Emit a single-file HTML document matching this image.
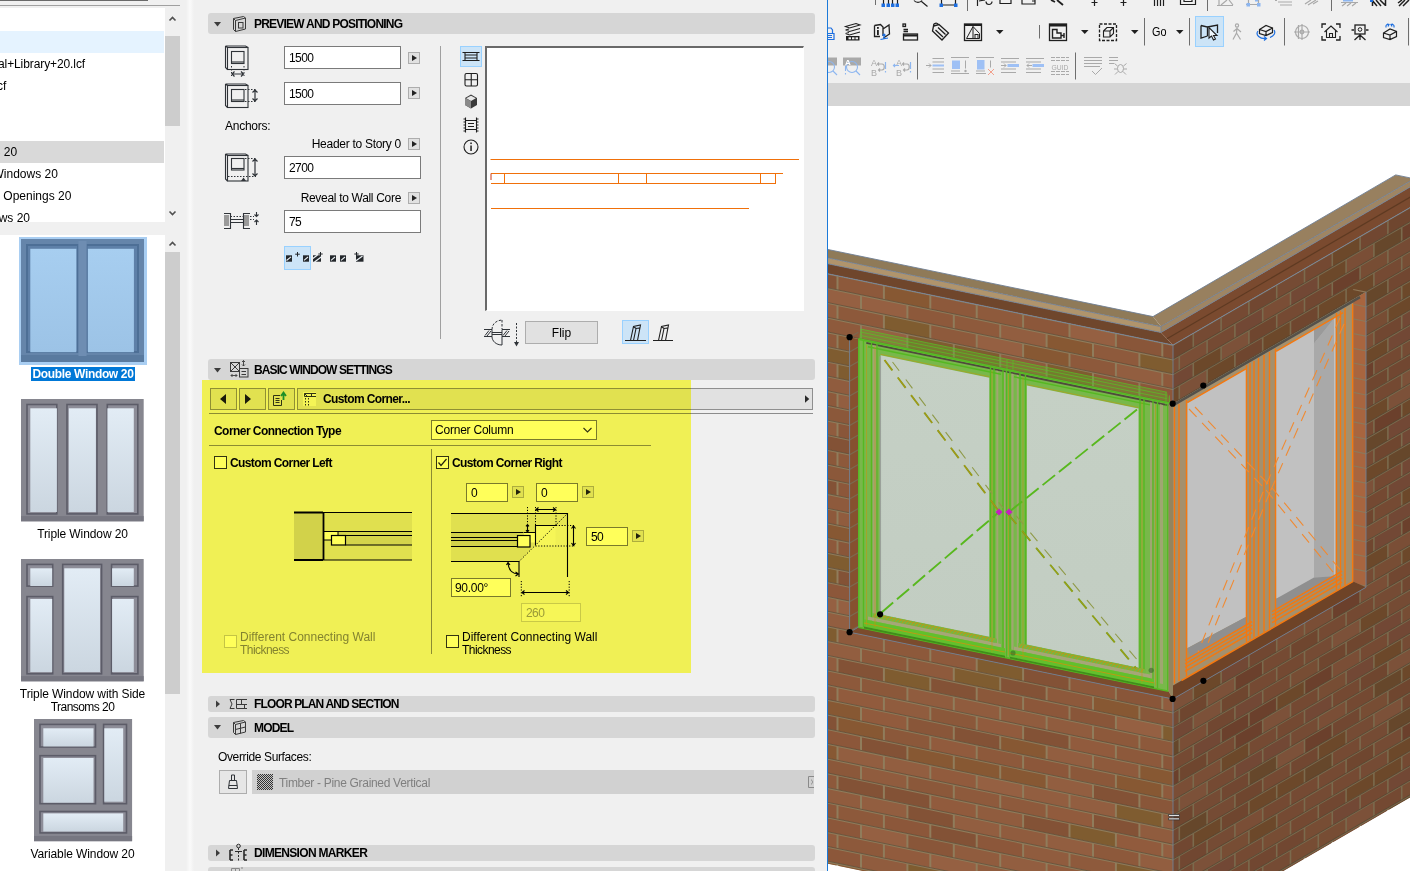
<!DOCTYPE html>
<html lang="en">
<head>
<meta charset="utf-8">
<title>Window Selection Settings</title>
<style>
html,body{margin:0;padding:0;}
body{width:1410px;height:871px;overflow:hidden;background:#f0f0f0;position:relative;
 font-family:"Liberation Sans",sans-serif;font-size:12px;color:#000;}
.a{position:absolute;}
.t{position:absolute;white-space:nowrap;line-height:14px;font-size:12px;}
.b{font-weight:bold;}
.sec{position:absolute;left:208px;width:607px;background:#d6d6d6;border-radius:3px;}
.sec .t{left:46px;font-weight:bold;font-size:12px;}
.inp{position:absolute;background:#fff;border:1px solid #7a7a7a;box-sizing:border-box;}
.inp span{position:absolute;left:4px;top:4px;font-size:12px;line-height:14px;letter-spacing:-0.6px;}
.ab{position:absolute;width:12px;height:12px;box-sizing:border-box;border:1px solid #adadad;background:#e1e1e1;}
.ab:after{content:"";position:absolute;left:3px;top:2px;border-left:5px solid #222;border-top:3.5px solid transparent;border-bottom:3.5px solid transparent;}
svg{position:absolute;overflow:visible;}
</style>
</head>
<body>

<!-- LEFT PANEL -->
<div class="a" style="left:0;top:0;width:148px;height:1.300px;background:#6a6a6a"></div>
<div class="a" style="left:0;top:5px;width:180px;height:1px;background:#a0a0a0"></div>
<div class="a" style="left:186px;top:0;width:8px;height:871px;background:linear-gradient(90deg,#f0f0f0,#fafafa 50%,#f0f0f0)"></div>

<!-- folder list -->
<div class="a" style="left:0;top:8px;width:165px;height:214px;background:#fff"></div>
<div class="a" style="left:0;top:31px;width:164px;height:22px;background:#e5f3ff"></div>
<div class="a" style="left:0;top:141px;width:164px;height:22px;background:#d9d9d9"></div>
<div class="t" style="left:-2px;top:57px;letter-spacing:-0.1px">al+Library+20.lcf</div>
<div class="t" style="left:-3px;top:79px">cf</div>
<div class="t" style="left:-5.500px;top:145px">s 20</div>
<div class="t" style="left:-7.500px;top:167px">Windows 20</div>
<div class="t" style="left:-6px;top:189px">v Openings 20</div>
<div class="t" style="left:-8px;top:211px;height:11px;overflow:hidden">ows 20</div>
<!-- list scrollbar -->
<div class="a" style="left:165px;top:8px;width:15px;height:214px;background:#f0f0f0"></div>
<div class="a" style="left:165px;top:36px;width:15px;height:90px;background:#cdcdcd"></div>
<svg style="left:165px;top:8px" width="15" height="214" viewBox="0 0 15 214"><path d="M4.5 12.5 L7.5 9.5 L10.5 12.5 M4.5 203.5 L7.5 206.5 L10.5 203.5" fill="none" stroke="#505050" stroke-width="1.6"/></svg>

<!-- thumbnails -->
<div class="a" style="left:0;top:235px;width:165px;height:636px;background:#fff"></div>
<div class="a" style="left:165px;top:235px;width:15px;height:636px;background:#f0f0f0"></div>
<div class="a" style="left:165px;top:252px;width:15px;height:441.500px;background:#cdcdcd"></div>
<svg style="left:165px;top:235px" width="15" height="20" viewBox="0 0 15 20"><path d="M4.5 10.5 L7.5 7.5 L10.5 10.5" fill="none" stroke="#505050" stroke-width="1.6"/></svg>

<!-- double window (selected) -->
<div class="a" style="left:19px;top:237px;width:128px;height:128px;background:#a9cef2"></div>
<svg style="left:21px;top:239px" width="123" height="123" viewBox="0 0 123 123">
 <defs><linearGradient id="gb" x1="0" y1="0" x2="0" y2="1"><stop offset="0" stop-color="#a7cef0"/><stop offset="1" stop-color="#9cc3e6"/></linearGradient></defs>
 <rect x="0" y="0" width="123" height="123" fill="#6585aa"/>
 <rect x="0" y="116" width="123" height="7" fill="#597a9f"/>
 <rect x="5" y="5" width="52.500" height="109" fill="#4d6f96"/><rect x="65.500" y="5" width="52.500" height="109" fill="#4d6f96"/>
 <rect x="57.500" y="2" width="8" height="115" fill="#6e8db2"/>
 <rect x="7" y="7" width="49" height="105" fill="#5e80a8"/><rect x="66.500" y="7" width="49.500" height="105" fill="#5e80a8"/>
 <rect x="9.300" y="9.800" width="46" height="103.400" fill="url(#gb)"/><rect x="66.900" y="9.800" width="46" height="103.400" fill="url(#gb)"/>
</svg>
<div class="a" style="left:31px;top:367px;width:104px;height:14px;background:#0078d7"></div>
<div class="t b" style="left:31px;top:367px;width:104px;text-align:center;color:#fff;font-size:12px;letter-spacing:-0.35px">Double Window 20</div>

<!-- triple window -->
<svg style="left:21.4px;top:399.3px" width="122.7" height="122.3" viewBox="0 0 122.7 122.3">
<defs><linearGradient id="g1" x1="0" y1="0" x2="0" y2="1"><stop offset="0" stop-color="#e2ecf5"/><stop offset="1" stop-color="#cbd6e0"/></linearGradient></defs>
<rect width="122.7" height="122.3" fill="#86868f"/><rect y="117.1" width="122.7" height="5.2" fill="#777781"/>
<g fill="#5c5c68"><rect x="5.2" y="4.7" width="31.4" height="111.0"/><rect x="45.2" y="4.7" width="31.6" height="111.0"/><rect x="85.5" y="4.7" width="32.1" height="111.0"/></g>
<g fill="#8d8d98"><rect x="6.800000000000001" y="6.300000000000001" width="28.2" height="107.8"/><rect x="46.800000000000004" y="6.300000000000001" width="28.4" height="107.8"/><rect x="87.1" y="6.300000000000001" width="28.9" height="107.8"/></g>
<g fill="url(#g1)"><rect x="9.3" y="9.3" width="26.6" height="103.7"/><rect x="47.8" y="9.3" width="27.1" height="103.7"/><rect x="86.4" y="9.3" width="26.4" height="103.7"/></g>
</svg>
<div class="t" style="left:0;top:527px;width:165px;text-align:center;letter-spacing:-0.1px">Triple Window 20</div>

<!-- triple window with side transoms -->
<svg style="left:21.4px;top:559.3px" width="122.7" height="122.3" viewBox="0 0 122.7 122.3">
<defs><linearGradient id="g2" x1="0" y1="0" x2="0" y2="1"><stop offset="0" stop-color="#e2ecf5"/><stop offset="1" stop-color="#cbd6e0"/></linearGradient></defs>
<rect width="122.7" height="122.3" fill="#86868f"/><rect y="117.1" width="122.7" height="5.2" fill="#777781"/>
<g fill="#5c5c68"><rect x="5.2" y="4.6" width="27.3" height="23.3"/><rect x="5.2" y="36.8" width="27.3" height="78.8"/><rect x="40.9" y="4.6" width="40.5" height="111.0"/><rect x="89.8" y="4.6" width="27.9" height="23.3"/><rect x="89.8" y="36.8" width="27.9" height="78.8"/></g>
<g fill="#8d8d98"><rect x="6.800000000000001" y="6.199999999999999" width="24.1" height="20.1"/><rect x="6.800000000000001" y="38.4" width="24.1" height="75.6"/><rect x="42.5" y="6.199999999999999" width="37.3" height="107.8"/><rect x="91.39999999999999" y="6.199999999999999" width="24.7" height="20.1"/><rect x="91.39999999999999" y="38.4" width="24.7" height="75.6"/></g>
<g fill="url(#g2)"><rect x="9.3" y="9.3" width="21.9" height="17.7"/><rect x="9.3" y="40" width="21.9" height="73"/><rect x="43.3" y="9.3" width="35.7" height="103.7"/><rect x="91.1" y="9.3" width="21.7" height="17.7"/><rect x="91.1" y="40" width="21.7" height="73"/></g>
</svg>
<div class="t" style="left:0;top:688px;width:165px;text-align:center;line-height:13px;letter-spacing:-0.1px">Triple Window with Side<br><span style="letter-spacing:-0.55px">Transoms 20</span></div>

<!-- variable window -->
<svg style="left:33.5px;top:719.2px" width="98.1" height="122.2" viewBox="0 0 98.1 122.2">
<defs><linearGradient id="g3" x1="0" y1="0" x2="0" y2="1"><stop offset="0" stop-color="#e2ecf5"/><stop offset="1" stop-color="#cbd6e0"/></linearGradient></defs>
<rect width="98.1" height="122.2" fill="#86868f"/><rect y="117.0" width="98.1" height="5.2" fill="#777781"/>
<g fill="#5c5c68"><rect x="5.2" y="4.6" width="57.1" height="24.2"/><rect x="5.2" y="35.9" width="57.1" height="49.6"/><rect x="68.8" y="4.6" width="24.5" height="80.9"/><rect x="5.2" y="91.7" width="88.1" height="23.0"/></g>
<g fill="#8d8d98"><rect x="6.800000000000001" y="6.199999999999999" width="53.9" height="21.0"/><rect x="6.800000000000001" y="37.5" width="53.9" height="46.4"/><rect x="70.39999999999999" y="6.199999999999999" width="21.3" height="77.7"/><rect x="6.800000000000001" y="93.3" width="84.9" height="19.8"/></g>
<g fill="url(#g3)"><rect x="9.3" y="9.3" width="50.2" height="18.2"/><rect x="9.3" y="39" width="50.2" height="44.7"/><rect x="70.3" y="9.3" width="18.9" height="73.4"/><rect x="9.3" y="94.4" width="79.9" height="18.1"/></g>
</svg>
<div class="t" style="left:0;top:847px;width:165px;text-align:center;letter-spacing:-0.1px">Variable Window 20</div>

<!-- MIDDLE PANEL -->

<!-- section: preview and positioning -->
<div class="sec" style="top:13px;height:21px"><div class="t" id="h1" style="top:4px;letter-spacing:-0.78px">PREVIEW AND POSITIONING</div></div>
<svg style="left:208px;top:13px" width="50" height="21" viewBox="0 0 50 21">
 <path d="M6 9 L13 9 L9.500 13.500 Z" fill="#3c3c3c"/>
 <g fill="none" stroke="#3a3a3a" stroke-width="1"><path d="M25.500 5.500 L35.500 3.500 L37.500 5 L37.500 16 L27.500 18.500 L25.500 16.500 Z M27.500 7.500 L37.500 5 M27.500 7.500 L27.500 18.500 M25.500 5.500 L27.500 7.500"/><rect x="30.500" y="9.500" width="4.500" height="5.500"/></g>
</svg>

<!-- width icon -->
<svg style="left:224px;top:45px" width="36" height="34" viewBox="0 0 36 34">
 <g fill="none" stroke="#2f3338" stroke-width="1.1"><rect x="3.500" y="2.500" width="20.500" height="22"/><path d="M1.500 1 L21.500 1 L24 2.500 M1.500 1 L1.500 22.500 L3.500 24.500 M1.500 1 L3.500 2.500"/><rect x="7.500" y="6.500" width="12.500" height="12"/><path d="M7.500 17 L20 17"/></g>
 <g stroke="#2f3338" stroke-width="1" stroke-dasharray="1.500 1.500"><path d="M7.500 21 L7.500 31 M20 21 L20 31"/></g>
 <path d="M8 29 L19.500 29 M10.500 26.500 L8 29 L10.500 31.500 M17 26.500 L19.500 29 L17 31.500" fill="none" stroke="#2f3338" stroke-width="1.200"/>
</svg>
<div class="inp" style="left:284px;top:46px;width:117px;height:23px"><span>1500</span></div>
<div class="ab" style="left:408px;top:52px"></div>

<!-- height icon -->
<svg style="left:224px;top:83px" width="36" height="26" viewBox="0 0 36 26">
 <g fill="none" stroke="#2f3338" stroke-width="1.1"><rect x="3.500" y="2.500" width="20.500" height="22"/><path d="M1.500 1 L21.500 1 L24 2.500 M1.500 1 L1.500 22.500 L3.500 24.500 M1.500 1 L3.500 2.500"/><rect x="7.500" y="6.500" width="12.500" height="12"/><path d="M7.500 17 L20 17"/></g>
 <g stroke="#2f3338" stroke-width="1" stroke-dasharray="1.500 1.500"><path d="M21 6.500 L32 6.500 M21 18.500 L32 18.500"/></g>
 <path d="M31 7 L31 18 M28.500 9.500 L31 7 L33.500 9.500 M28.500 15.500 L31 18 L33.500 15.500" fill="none" stroke="#2f3338" stroke-width="1.200"/>
</svg>
<div class="inp" style="left:284px;top:82px;width:117px;height:23px"><span>1500</span></div>
<div class="ab" style="left:408px;top:87px"></div>

<div class="t" style="left:225px;top:119px;letter-spacing:-0.26px">Anchors:</div>
<div class="t" id="hs" style="left:281px;top:137px;width:120px;text-align:right;letter-spacing:-0.28px">Header to Story 0</div>
<div class="ab" style="left:408px;top:138px"></div>

<!-- header icon -->
<svg style="left:224px;top:153px" width="36" height="30" viewBox="0 0 36 30">
 <g fill="none" stroke="#2f3338" stroke-width="1.1"><rect x="3.500" y="2.500" width="20.500" height="25.500"/><path d="M1.500 1 L21.500 1 L24 2.500 M1.500 1 L1.500 26 L3.500 28 M1.500 1 L3.500 2.500"/><rect x="7.500" y="5.500" width="12.500" height="11.500"/><path d="M7.500 15.500 L20 15.500"/></g>
 <g stroke="#2f3338" stroke-width="1" stroke-dasharray="1.500 1.500"><path d="M21 5.500 L32 5.500 M4 23.500 L32 23.500"/></g>
 <path d="M31 6 L31 23 M28.500 8.500 L31 6 L33.500 8.500 M28.500 20.500 L31 23 L33.500 20.500" fill="none" stroke="#2f3338" stroke-width="1.200"/>
 <path d="M17 28 L19.500 24.500 L22 28 Z" fill="#2f3338"/>
</svg>
<div class="inp" style="left:284px;top:156px;width:137px;height:23px"><span>2700</span></div>

<div class="t" id="rw" style="left:281px;top:191px;width:120px;text-align:right;letter-spacing:-0.31px">Reveal to Wall Core</div>
<div class="ab" style="left:408px;top:192px"></div>

<!-- reveal icon -->
<svg style="left:223px;top:211px" width="38" height="20" viewBox="0 0 38 20">
 <g fill="#9a9a9a" stroke="none"><rect x="1" y="4" width="5" height="11"/><rect x="21" y="4" width="5" height="11"/></g>
 <g fill="none" stroke="#2f3338" stroke-width="1.100"><path d="M1 2.500 L7.500 2.500 L7.500 17.500 L1 17.500 M27 2.500 L20.500 2.500 L20.500 17.500 L27 17.500"/><path d="M7.500 8.500 L20.500 8.500 M7.500 11.500 L20.500 11.500"/></g>
 <g stroke="#2f3338" stroke-width="1" stroke-dasharray="1.500 1.500"><path d="M7.500 5.500 L20.500 5.500 M27 5.500 L31 5.500 M27 8.500 L31 8.500"/></g>
 <path d="M33.500 1 L33.500 5.500 M31.500 3.500 L33.500 5.500 L35.500 3.500 M33.500 14 L33.500 9 M31.500 11 L33.500 9 L35.500 11" fill="none" stroke="#2f3338" stroke-width="1.100"/>
</svg>
<div class="inp" style="left:284px;top:210px;width:137px;height:23px"><span>75</span></div>

<!-- small anchor icons -->
<div class="a" style="left:284px;top:246px;width:27px;height:24px;background:#cce4f7;box-sizing:border-box;border:1px solid #99d1ff"></div>
<svg style="left:284px;top:246px" width="90" height="24" viewBox="0 0 90 24">
 <g fill="#23272b"><rect x="2" y="9.300" width="6" height="6.400"/><rect x="19" y="9.300" width="6" height="6.400"/><rect x="29" y="9.300" width="8" height="6.400"/><rect x="46" y="9.300" width="6" height="6.400"/><rect x="56" y="9.300" width="6" height="6.400"/><rect x="72" y="9.300" width="7.500" height="6.400"/></g>
 <g stroke="#e9eef2" stroke-width="1.100" fill="none"><path d="M2.500 14.500 L7 10.800 M20 14.300 L24 11 M47 14.300 L51 11 M57 14.300 L61 11"/><path d="M28.500 12.800 L33.500 9 M30.500 16 L37.500 10.800 M72 14.800 L78.500 10" stroke-width="1.300"/></g>
 <g stroke="#23272b" stroke-width="1" fill="none"><path d="M13.500 6 L13.500 10.500 M11.200 8.200 L15.800 8.200"/><path d="M36.500 6 L36.500 10 M34.300 8 L38.700 8"/><path d="M72.500 6 L72.500 10 M70.300 8 L74.700 8"/></g>
</svg>

<!-- separator + preview modes -->
<div class="a" style="left:440px;top:46px;width:1px;height:293px;background:#a0a0a0"></div>
<div class="a" style="left:460px;top:46px;width:22px;height:21px;background:#cce4f7;box-sizing:border-box;border:1px solid #99d1ff"></div>
<svg style="left:460px;top:46px" width="22" height="112" viewBox="0 0 22 112">
 <g fill="none" stroke="#1f1f1f" stroke-width="1.100">
  <path d="M2.500 6.500 L19.500 6.500 M2.500 14.500 L19.500 14.500 M5 6.500 L5 14.500 M17 6.500 L17 14.500 M5 9 L17 9 M5 12 L17 12" />
  <rect x="5" y="27.500" width="12.500" height="12.500" rx="1.500"/><path d="M11.250 27.500 L11.250 40 M5 33.750 L17.500 33.750"/>
  <path d="M5.500 71.500 L5.500 86.500 M16.500 71.500 L16.500 86.500 M5.500 74.500 L16.500 74.500 M5.500 83.500 L16.500 83.500 M8 77.500 L14 77.500 M8 80.500 L14 80.500 M3.500 73 L5.500 73 M3.500 76 L5.500 76 M3.500 79 L5.500 79 M3.500 82 L5.500 82 M3.500 85 L5.500 85 M16.500 73 L18.500 73 M16.500 76 L18.500 76 M16.500 79 L18.500 79 M16.500 82 L18.500 82 M16.500 85 L18.500 85"/>
  <circle cx="11" cy="101" r="7"/>
 </g>
 <path d="M11 48.500 L17 52 L17 59 L11 62.500 L5 59 L5 52 Z" fill="#3a3a3a"/><path d="M11 49.800 L15.800 52.300 L11 55 L6.200 52.300 Z" fill="#e8e8e8"/><path d="M11 55 L11 62.500 L5 59 L5 52 Z" fill="#8a8a8a"/>
 <rect x="10.300" y="99.500" width="1.500" height="5.500" fill="#1f1f1f"/><rect x="10.300" y="96.500" width="1.500" height="1.600" fill="#1f1f1f"/>
</svg>

<!-- preview box -->
<div class="a" style="left:485px;top:46px;width:319px;height:265px;background:#fff;box-sizing:border-box;border-left:2px solid #696969;border-top:2px solid #696969;border-right:1px solid #fff;border-bottom:1px solid #fff"></div>
<svg style="left:485px;top:46px" width="319" height="265" viewBox="0 0 319 265">
 <g fill="none" stroke="#f0700a" stroke-width="1">
  <path d="M5.500 113.500 L314 113.500"/>
  <path d="M6 127.500 L298 127.500 M6 137.500 L291 137.500"/>
  <path d="M19.500 127.500 L19.500 137.500 M133.500 127.500 L133.500 137.500 M161.500 127.500 L161.500 137.500 M275.500 127.500 L275.500 137.500 M290.500 127.500 L290.500 137.500"/>
  <path d="M6 162.500 L264 162.500"/>
 </g>
 <path d="M6 127.500 L6 134" stroke="#c83a1a" stroke-width="1"/>
</svg>

<!-- flip row -->
<svg style="left:482px;top:318px" width="40" height="32" viewBox="0 0 40 32">
 <g fill="none" stroke="#2f3338" stroke-width="1"><path d="M2 11.500 L10 11.500 L10 18.500 L2 18.500 M28 11.500 L20 11.500 L20 18.500 L28 18.500"/><path d="M10 14.500 L20 14.500 M10 16.500 L20 16.500"/><path d="M20 18.500 L20 27 C14 27 10 23 10 18.500"/><path d="M10 11.500 C10 6 14 2.500 20 2" stroke-dasharray="2.500 1.500"/><path d="M20 2 L20 11" stroke-dasharray="2.500 1.500"/><path d="M3 17.500 L7 12.500 M5 18 L9 13 M21 17.500 L25 12.500 M23 18 L27 13"/></g>
 <path d="M34.500 5 L34.500 26" stroke="#2f3338" stroke-width="1" stroke-dasharray="2 1.500"/><path d="M32 24 L34.500 28.500 L37 24 Z" fill="#2f3338"/>
</svg>
<div class="a" style="left:525px;top:321px;width:73px;height:23px;background:#e1e1e1;border:1px solid #adadad;box-sizing:border-box"></div>
<div class="t" style="left:525px;top:326px;width:73px;text-align:center">Flip</div>
<div class="a" style="left:622px;top:320px;width:27px;height:24px;background:#cce4f7;box-sizing:border-box;border:1px solid #99d1ff"></div>
<svg style="left:622px;top:320px" width="60" height="24" viewBox="0 0 60 24">
 <g fill="none" stroke="#1f1f1f" stroke-width="1.100"><path d="M3 20.500 L24 20.500 M8.500 20.500 L11.500 6.500 L18.500 5 L15.500 20.500 M11.500 20.500 L14 8.500 M14 8.500 L17.500 8 M11.500 6.500 L14 8.500"/>
 <path d="M31 20.500 L51 20.500 M36.500 20.500 L39.500 6.500 L46.500 5 L43.500 20.500 M39.500 20.500 L42 8.500 M42 8.500 L45.500 8 M39.500 6.500 L42 8.500"/></g>
</svg>

<!-- section: basic window settings -->
<div class="sec" style="top:359px;height:21px"><div class="t" id="h2" style="top:4px;letter-spacing:-0.9px">BASIC WINDOW SETTINGS</div></div>
<svg style="left:208px;top:359px" width="50" height="21" viewBox="0 0 50 21">
 <path d="M6 9 L13 9 L9.500 13.500 Z" fill="#3c3c3c"/>
 <g fill="none" stroke="#3a3a3a" stroke-width="1"><rect x="22.500" y="3.500" width="9" height="9"/><path d="M22.500 3.500 L31.500 12.500 M31.500 3.500 L22.500 12.500"/><rect x="31.500" y="9.500" width="8.500" height="8.500" fill="#d6d6d6"/><path d="M33.500 12.500 L38 12.500 M33.500 15.500 L38 15.500"/></g>
 <path d="M35.500 1.500 L35.500 7 M34 3 L35.500 1.500 L37 3 M34 5.500 L35.500 7 L37 5.500 M23 16.500 L29 16.500 M24.500 15 L23 16.500 L24.500 18 M27.500 15 L29 16.500 L27.500 18" fill="none" stroke="#3a3a3a" stroke-width="0.900"/>
</svg>

<!-- nav row -->
<div class="a" style="left:210px;top:388px;width:27px;height:22px;background:#e1e1e1;border:1px solid #8f8f8f;box-sizing:border-box"></div>
<div class="a" style="left:239px;top:388px;width:27px;height:22px;background:#e1e1e1;border:1px solid #8f8f8f;box-sizing:border-box"></div>
<div class="a" style="left:268px;top:388px;width:27px;height:22px;background:#e1e1e1;border:1px solid #8f8f8f;box-sizing:border-box"></div>
<div class="a" style="left:297px;top:388px;width:516px;height:22px;background:#e1e1e1;border:1px solid #8f8f8f;box-sizing:border-box"></div>
<svg style="left:210px;top:388px" width="605" height="22" viewBox="0 0 605 22">
 <path d="M16 6 L16 16 L10 11 Z M35 6 L35 16 L41 11 Z" fill="#1a1a1a"/>
 <g fill="none" stroke="#2f3338" stroke-width="1"><path d="M63.500 7.500 L70 7.500 M63.500 7.500 L63.500 17.500 L71.500 17.500 L71.500 12 M65.500 10.500 L69.500 10.500 M65.500 12.500 L69.500 12.500 M65.500 14.500 L69.500 14.500"/></g>
 <path d="M73.500 12 L73.500 6 M71 8 L73.500 4.500 L76 8" fill="none" stroke="#1e8f6e" stroke-width="1.800"/>
 <rect x="93" y="4" width="13" height="14" fill="#f4f4f4"/>
 <g fill="none" stroke="#2f3338" stroke-width="1"><path d="M94.500 5.500 L106 5.500 M94.500 8.500 L106 8.500 M101.500 5.500 L101.500 8.500 M94.500 5.500 L94.500 8.500 M97.500 8.500 L94.500 5.500"/><path d="M95.500 10 L95.500 18 M98.500 10 L98.500 18" stroke-dasharray="1.500 1.500"/></g>
 <path d="M595 7.200 L595 14.800 L599.300 11 Z" fill="#2a2a2a"/>
</svg>
<div class="t b" id="cc" style="left:323px;top:392px;letter-spacing:-0.61px">Custom Corner...</div>
<div class="a" style="left:209px;top:413px;width:604px;height:1px;background:#8c8c8c"></div>

<div class="t b" id="cct" style="left:214px;top:424px;letter-spacing:-0.55px">Corner Connection Type</div>
<div class="inp" style="left:431px;top:420px;width:166px;height:20px;border-color:#7a7a7a"><span style="left:3px;top:2px;letter-spacing:-0.22px">Corner Column</span></div>
<svg style="left:580px;top:424px" width="14" height="12" viewBox="0 0 14 12"><path d="M3.500 4 L7.500 8 L11.500 4" fill="none" stroke="#333" stroke-width="1.100"/></svg>
<div class="a" style="left:209px;top:445px;width:442px;height:1px;background:#8c8c8c"></div>
<div class="a" style="left:431px;top:449px;width:1px;height:205px;background:#8c8c8c"></div>

<!-- left column -->
<div class="a" style="left:214px;top:456px;width:13px;height:13px;background:#fff;border:1px solid #333;box-sizing:border-box"></div>
<div class="t b" id="ccl" style="left:230px;top:456px;letter-spacing:-0.6px">Custom Corner Left</div>
<svg style="left:294px;top:511px" width="119" height="51" viewBox="0 0 119 51">
 <rect x="0" y="1" width="29" height="48" fill="#d2d2d2"/>
 <rect x="29" y="1" width="89" height="48" fill="#e0e0e0"/>
 <rect x="44" y="20" width="74" height="14" fill="#d4d4d4"/>
 <rect x="29" y="20" width="15" height="9" fill="#fff"/><rect x="37.500" y="24.500" width="14" height="9.500" fill="#fff"/>
 <g fill="none" stroke="#000"><path d="M0 1.500 L118 1.500 M0 49 L118 49" stroke-width="1.200"/><path d="M29.500 1 L29.500 49" stroke-width="1.800"/><path d="M0 1.500 L29 1.500 M0 49 L29 49" stroke-width="2"/>
 <path d="M44 20.500 L118 20.500 M44 24.500 L118 24.500 M51.500 34 L118 34 M29 20.500 L44 20.500 L44 24.500 M29 29 L37.500 29" stroke-width="1"/><rect x="37.500" y="24.500" width="14" height="9.500" stroke-width="1.200"/></g>
</svg>
<div class="a" style="left:224px;top:635px;width:13px;height:13px;background:#fff;border:1px solid #c4c4c4;box-sizing:border-box"></div>
<div class="t" style="left:240px;top:630.500px;color:#838383;line-height:13px;letter-spacing:0px">Different Connecting Wall<br><span style="letter-spacing:-0.55px">Thickness</span></div>

<!-- right column -->
<div class="a" style="left:436px;top:456px;width:13px;height:13px;background:#fff;border:1px solid #333;box-sizing:border-box"></div>
<svg style="left:436px;top:456px" width="13" height="13" viewBox="0 0 13 13"><path d="M2.500 6.500 L5 9.500 L10.500 3" fill="none" stroke="#222" stroke-width="1.200"/></svg>
<div class="t b" id="ccr" style="left:452px;top:456px;letter-spacing:-0.6px">Custom Corner Right</div>
<div class="inp" style="left:466px;top:483px;width:42px;height:19px"><span style="top:2px">0</span></div>
<div class="ab" style="left:512px;top:486px"></div>
<div class="inp" style="left:536px;top:483px;width:42px;height:19px"><span style="top:2px">0</span></div>
<div class="ab" style="left:582px;top:486px"></div>
<div class="inp" style="left:586px;top:527px;width:42px;height:19px"><span style="top:2px">50</span></div>
<div class="ab" style="left:632px;top:530px"></div>
<div class="inp" style="left:451px;top:578px;width:60px;height:19px"><span style="top:2px;left:3px;letter-spacing:-0.3px">90.00°</span></div>
<div class="inp" style="left:521px;top:603px;width:60px;height:19px;border-color:#c9c9c9;background:#f6f6f6"><span style="top:2px;color:#9a9a9a">260</span></div>
<svg style="left:451px;top:505px" width="126" height="94" viewBox="0 0 126 94">
 <path d="M0 8 L116 8 L68 56 L0 56 Z" fill="#e0e0e0"/><rect x="84.500" y="8.500" width="32" height="12" fill="#e6e6e6"/>
 <path d="M87 8 L116 8 L116 72 L116 8 Z" fill="none"/>
 <rect x="0" y="27" width="66" height="15" fill="#d2d2d2"/><rect x="73" y="27.500" width="11.500" height="10" fill="#fff"/>
 <rect x="84.500" y="20.500" width="20" height="20" fill="#f6f6f6"/>
 <g fill="none" stroke="#000">
  <path d="M0 8.500 L116.500 8.500 L116.500 72" stroke-width="1.100"/>
  <path d="M0 56.500 L68 56.500 L68 72" stroke-width="1.100"/>
  <path d="M0 27.500 L72 27.500 M0 32.500 L66 32.500 M0 35.500 L66 35.500 M0 41.500 L66 41.500" stroke-width="1.100"/>
  <rect x="66.500" y="30.500" width="12.500" height="11.500" fill="#fff" stroke-width="1.200"/>
  <path d="M72.500 27.500 L84.500 27.500 L84.500 20.500 L105 20.500 M84.500 27.500 L84.500 40" stroke-width="1.100"/>
  <g stroke-dasharray="1.200 1.600" stroke-width="1"><path d="M68 56.500 L116.500 8.500 M84.500 41 L124 41 M105 20.500 L124 20.500 M76.500 2 L76.500 19 M84.500 2 L84.500 20 M105 2 L105 20 M70.300 76 L70.300 92.500 M118.200 76 L118.200 92.500"/></g>
  <path d="M85 4.500 L104.500 4.500 M87.500 2.500 L85 4.500 L87.500 6.500 M102 2.500 L104.500 4.500 L102 6.500" stroke-width="1.100"/>
  <path d="M122.500 21 L122.500 40.500 M120.500 23.500 L122.500 21 L124.500 23.500 M120.500 38 L122.500 40.500 L124.500 38" stroke-width="1.100"/>
  <path d="M76.500 19.500 L76.500 27 M75 21.300 L76.500 19.500 L78 21.300 M75 25.200 L76.500 27 L78 25.200" stroke-width="1.100"/>
  <path d="M71 87.500 L117.500 87.500 M73.500 85.500 L71 87.500 L73.500 89.500 M115 85.500 L117.500 87.500 L115 89.500" stroke-width="1.100"/>
  <path d="M57 58 C57.500 65 61 68.500 67 69 M55.500 60 L57 57.500 L59 60 M64.500 67 L67.500 69 L64.500 71" stroke-width="1.100"/>
 </g>
</svg>
<div class="a" style="left:446px;top:635px;width:13px;height:13px;background:#fff;border:1px solid #333;box-sizing:border-box"></div>
<div class="t" style="left:462px;top:630.500px;line-height:13px;letter-spacing:0px">Different Connecting Wall<br><span style="letter-spacing:-0.55px">Thickness</span></div>

<!-- yellow highlight overlay -->
<div class="a" style="left:202px;top:380px;width:489px;height:293px;background:#ffff5a;mix-blend-mode:multiply"></div>

<!-- section: floor plan and section -->
<div class="sec" style="top:696px;height:16px"><div class="t" id="h3" style="top:1px;letter-spacing:-0.86px">FLOOR PLAN AND SECTION</div></div>
<svg style="left:208px;top:696px" width="50" height="16" viewBox="0 0 50 16">
 <path d="M8 4.500 L8 11.500 L12 8 Z" fill="#3c3c3c"/>
 <g fill="none" stroke="#3a3a3a" stroke-width="1"><path d="M22 3.500 L26.500 3.500 M22 12.500 L26.500 12.500 M22 3.500 L24 8 L22 12.500 M28.500 3.500 L39 3.500 M33.500 3.500 L33.500 8.500 M28.500 8.500 L39 8.500 M28.500 3.500 L28.500 12.500 L39 12.500 M36.500 8.500 L36.500 12.500"/></g>
</svg>

<!-- section: model -->
<div class="sec" style="top:717px;height:21px"><div class="t" id="h4" style="top:4px;letter-spacing:-0.8px">MODEL</div></div>
<svg style="left:208px;top:717px" width="50" height="21" viewBox="0 0 50 21">
 <path d="M6 8 L13 8 L9.500 12.500 Z" fill="#3c3c3c"/>
 <g fill="none" stroke="#3a3a3a" stroke-width="1"><path d="M25.500 5.500 L35.500 3.500 L37.500 5 L37.500 15 L27.500 17.500 L25.500 15.500 Z M27.500 7.500 L37.500 5 M27.500 7.500 L27.500 17.500 M25.500 5.500 L27.500 7.500 M32.500 6.500 L32.500 16.500 M27.500 12.500 L37.500 10"/></g>
</svg>
<div class="t" style="left:218px;top:750px;letter-spacing:-0.37px">Override Surfaces:</div>
<div class="a" style="left:219px;top:770px;width:28px;height:24px;background:#e6e6e6;border:1px solid #adadad;box-sizing:border-box"></div>
<svg style="left:219px;top:770px" width="28" height="24" viewBox="0 0 28 24"><g fill="none" stroke="#2f3338" stroke-width="1"><path d="M12.500 5 L15.500 5 L15.500 10.500 L12.500 10.500 Z M10.500 10.500 L17.500 10.500 L18.500 18.500 L9.500 18.500 Z M9.800 15.500 L18.200 15.500"/></g></svg>
<div class="a" style="left:252px;top:770px;width:562px;height:24px;background:#d1d1d1"></div>
<div class="a" style="left:257px;top:774px;width:16px;height:16px;background:#888;background-image:repeating-conic-gradient(#333 0 25%,#c4c4c4 0 50%);background-size:2px 2px"></div>
<div class="t" style="left:279px;top:776px;color:#7f7f7f;letter-spacing:-0.31px">Timber - Pine Grained Vertical</div>
<svg style="left:806px;top:775px" width="8" height="14" viewBox="0 0 8 14"><path d="M8 1.500 L2.500 1.500 L2.500 12.500 L8 12.500 M5 5 C7 5 7 9 5 9" fill="none" stroke="#8a8a8a" stroke-width="1"/></svg>

<!-- section: dimension marker -->
<div class="sec" style="top:845px;height:16px"><div class="t" id="h5" style="top:1px;letter-spacing:-0.68px">DIMENSION MARKER</div></div>
<svg style="left:208px;top:843px" width="50" height="20" viewBox="0 0 50 20">
 <path d="M8 6.500 L8 13.500 L12 10 Z" fill="#3c3c3c"/>
 <g fill="none" stroke="#2a2a2a" stroke-width="1.600"><path d="M22 7 L22 17 M22 7 L25 7 M22 12 L24.500 12 M22 17 L25 17 M36 7 L36 17 M36 7 L39 7 M36 12 L38.500 12 M36 17 L39 17"/></g>
 <g fill="none" stroke="#2a2a2a" stroke-width="1"><path d="M30.500 5 L30.500 18" stroke-dasharray="2 1.500"/><circle cx="30.500" cy="3" r="1.800"/><path d="M27 8.500 L34 8.500"/></g>
</svg>
<div class="sec" style="top:867px;height:10px"></div>
<svg style="left:208px;top:866px" width="50" height="6" viewBox="0 0 50 6"><g fill="none" stroke="#8a8a8a" stroke-width="1"><path d="M23.500 6 L23.500 2.500 L31.500 2.500 L31.500 6 M27.500 2.500 L27.500 6 M34 1 L34 3"/></g></svg>

<!-- RIGHT: TOOLBAR -->
<div class="a" style="left:828px;top:83px;width:582px;height:23px;background:#d5d5d5"></div>
<div class="a" style="left:828px;top:106px;width:582px;height:765px;background:#fff"></div>
<div class="a" style="left:1195px;top:16px;width:29px;height:31px;background:#cce4f7;box-sizing:border-box;border:1px solid #99d1ff"></div>
<svg style="left:828px;top:0;overflow:hidden" width="582" height="83" viewBox="828 0 582 83">
 <!-- separators -->
 <g stroke="#6e6e6e" stroke-width="1"><path d="M875.500 0 L875.500 5 M967.500 0 L967.500 11 M1207.500 0 L1207.500 11 M1331.500 0 L1331.500 11 M1039.500 25 L1039.500 38.500 M1144.500 18 L1144.500 45.500 M1189.500 18 L1189.500 45.500 M1284.500 18 L1284.500 45.500 M1408.500 18 L1408.500 45.500 M917.500 52.500 L917.500 79.500 M1075.500 52.500 L1075.500 79.500"/></g>
 <!-- row 1 (cropped) -->
 <g fill="none" stroke="#1f1f1f" stroke-width="1.200">
  <path d="M883.500 0 L883.500 5 M888.500 0 L888.500 5 M892.500 0 L892.500 5 M897.500 0 L897.500 5"/>
  <path d="M914 0.500 C916 3 920 3 922 0.500 M921.500 1.500 L927.500 6.500"/>
  <path d="M941.500 0 L941.500 5 L955.500 5 L955.500 0"/>
  <path d="M977.500 0 L977.500 6 M979 1 L985 0 M986 1.500 A2.500 2.500 0 0 0 992 1.500"/>
  <path d="M1000 0 L1000 3.500 L1011 3.500 L1011 0 M1022 0 L1022 4 L1035 4 L1035 0 M1032 1 L1035 1"/>
  <path d="M1051 0 L1055 2 M1057 0 L1063 5" stroke-width="1.800"/>
  <path d="M1094.500 0 L1094.500 6 M1091.500 2.500 L1097.500 2.500 M1123.500 0 L1123.500 6 M1120.500 2.500 L1126.500 2.500"/>
  <path d="M1154.500 0 L1154.500 6 M1157.500 0 L1157.500 6 M1160.500 0 L1160.500 6 M1163.500 0 L1163.500 6"/>
  <path d="M1180.500 0 L1180.500 4.500 L1195.500 4.500 L1195.500 0 M1184 0 L1184 1.500 L1192 1.500 L1192 0"/>
  <path d="M1372 0 L1377 6 M1376 0 L1381 6 M1380 0 L1385 5 M1372.500 0 L1372.500 6 M1385.500 0 L1385.500 6 M1398 3 L1402 0 M1399 6 L1405 0 M1403 6 L1409 0" stroke-width="1.500"/>
 </g>
 <g fill="#1e6fe0"><rect x="881.500" y="3.500" width="3.500" height="3.500"/><rect x="886.500" y="3.500" width="3.500" height="3.500"/><rect x="891" y="3.500" width="3.500" height="3.500"/><rect x="895.500" y="3.500" width="3.500" height="3.500"/><rect x="939.500" y="3.500" width="3.500" height="3.500"/><rect x="954" y="3.500" width="3.500" height="3.500"/><rect x="1370" y="0" width="3" height="2"/></g>
 <g fill="none" stroke="#a9a9a9" stroke-width="1.200">
  <path d="M1217 5.500 L1233 5.500 M1219 0 L1219 5.500 M1221 5 L1227 0 M1233 5 L1229 0"/>
  <path d="M1246 4.500 L1260 4.500 M1248.500 0 L1248.500 4.500 M1258.500 0 L1258.500 4.500"/>
  <path d="M1278 2 L1292 2 M1280 5 L1292 5 M1275 0.500 L1277 0.500"/>
  <path d="M1305 4 L1311 0 M1308 5 L1316 0 M1313 4 L1318 1"/>
  <path d="M1341 2.500 L1358 2.500 M1342 6 L1346 3 M1347 6 L1351 3 M1352 6 L1356 3"/>
 </g>
 <g fill="#8db6f0"><rect x="1246.500" y="3" width="3.500" height="3.500"/><rect x="1257" y="3" width="3.500" height="3.500"/><rect x="1255" y="0" width="3" height="1.500"/><rect x="1343" y="0" width="10" height="1.500"/></g>

 <!-- row 2 -->
 <g fill="none" stroke="#1e6fe0" stroke-width="1.200"><path d="M828 28 L831 28 L832.500 30 L832.500 33 M828 33.500 L834 33.500 L834 39.500 L828 39.500 M828 35.500 L832 35.500 M828 37.500 L832 37.500"/></g>
 <g fill="none" stroke="#1f1f1f" stroke-width="1.300">
  <!-- layers -->
  <path d="M845.500 26.500 L856 23.500 L860 25 L849.500 28 Z M845.500 30 L849 29 M860 28.500 L849.500 31.500 L845.500 30 M845.500 33.500 L849 32.500 M860 32 L849.500 35 L845.500 33.500" stroke-width="1.100"/>
  <!-- info/book -->
  <path d="M874.500 25.500 L874.500 36.500 L880 36.500 M874.500 25.500 L880.500 24.500 L883 27 L883 36 M883 29 L889 25 L889.500 34 L883.500 38"/>
  <!-- stair/list -->
  <rect x="903" y="24" width="2.500" height="2.500"/><path d="M903.500 29.500 L908 29.500 M903.500 31.500 L908 31.500"/>
  <rect x="903.500" y="34" width="14" height="6"/>
  <!-- tag -->
  <path d="M933.500 26 L939 24.500 L948.500 33 L942 40 L932.500 31 Z M935.500 30 L943 37 M938 27.500 L945.500 34.500"/><path d="M934 26.500 C932 23 938 22 938.500 25"/>
  <!-- house frame -->
  <rect x="964.500" y="24" width="17" height="16.500"/><path d="M966.500 38.500 L973 26.500 L979.500 33.500 L979.500 38.500 Z M973 26.500 L973 38.500" stroke-width="1"/><rect x="975" y="34.500" width="3" height="4" stroke-width="1"/>
  <!-- floor plan -->
  <rect x="1049.500" y="24" width="17" height="16.500"/><path d="M1052.500 38 L1052.500 29.500 L1057 29.500 L1057 33 L1061 33 L1061 38 Z M1061 35.500 L1064 35.500 M1064 33 L1064 38" stroke-width="1.400"/>
  <!-- dashed cube -->
  <rect x="1099.500" y="24" width="17" height="16.500" stroke-dasharray="3 1.500"/><path d="M1103.500 31 L1107 27.500 L1113.500 27.500 L1113.500 33.500 L1110 37 L1103.500 37 Z M1103.500 31 L1110 31 L1110 37 M1110 31 L1113.500 27.500" stroke-width="1.100"/>
  <!-- 3d window select -->
  <path d="M1201 25.500 L1201 38 L1207.500 36 M1201 25.500 L1207.500 27 L1207.500 36 M1207.500 27 L1217.500 25 L1217.500 33" />
  <path d="M1209 27.500 L1209 38 L1211.500 36 L1213.500 40 L1215.500 39 L1213.500 35.500 L1217 35.500 Z" fill="#f0f7fd" stroke-width="1.100"/>
  <!-- orbit box -->
  <path d="M1259.500 29.500 L1266 25.500 L1272.500 28 L1272.500 32.500 L1266 35.500 L1259.500 33.500 Z M1259.500 29.500 L1266 31.500 L1272.500 28 M1266 31.500 L1266 35.500" stroke-width="1.200"/>
  <!-- house brackets -->
  <path d="M1322 28 L1322 24 L1326 24 M1336 24 L1340 24 L1340 28 M1340 36 L1340 40 L1336 40 M1326 40 L1322 40 L1322 36"/><path d="M1324.500 32 L1331 26 L1337.500 32 M1326.500 30.500 L1326.500 37.500 L1335.500 37.500 L1335.500 30.500 M1329.500 37.500 L1329.500 33.500 L1332.500 33.500 L1332.500 37.500" stroke-width="1.100"/>
  <!-- tripod cam -->
  <rect x="1355" y="25" width="10" height="9"/><circle cx="1360" cy="29.500" r="1.800" stroke-width="1"/><path d="M1351.500 30 L1354 30 M1366 30 L1368.500 30 M1360 34 L1360 40 M1360 35 L1354.500 40 M1360 35 L1365.500 40"/>
  <!-- box arrows -->
  <path d="M1383.500 33 L1390 29 L1396.500 31.500 L1396.500 36.500 L1390 39.500 L1383.500 37.500 Z M1383.500 33 L1390 35 L1396.500 31.500 M1390 35 L1390 39.500" stroke-width="1.200"/>
 </g>
 <g fill="#1f1f1f"><rect x="846" y="36" width="13.500" height="4.500"/><rect x="904" y="34.500" width="13" height="2"/><rect x="965" y="24" width="16" height="2"/><rect x="1050" y="24" width="16" height="2.500"/>
  <path d="M996 30 L1003.500 30 L999.750 34 Z M1081 30 L1088.500 30 L1084.750 34 Z M1131 30 L1138.500 30 L1134.750 34 Z M1176 30 L1183.500 30 L1179.750 34 Z"/>
  <rect x="877" y="27" width="1.800" height="1.800"/><rect x="877" y="30" width="1.800" height="5"/></g>
 <g fill="#f0f0f0"><rect x="848.500" y="37.300" width="2.500" height="2"/><rect x="852" y="37.300" width="2.500" height="2"/><rect x="855.500" y="37.300" width="2.500" height="2"/></g>
 <g fill="none" stroke="#1e6fe0" stroke-width="1.200"><path d="M884 34 L884 40 M880.500 39.500 L888 38 M882.500 35.500 L884 34 L885.500 35.500"/>
  <path d="M1258 31 C1255 35 1260 39 1266 38.500 M1264 36.500 L1266.500 38.500 L1264 40.500 M1274 30 C1276 33 1274 36 1270 37.500"/>
  <path d="M1386 27.500 C1385.500 25 1387 24 1389 24.500 M1387 24 L1389 24.500 L1388 26.500 M1394 27.500 C1394.500 25 1393 24 1391 24.500 M1393 24 L1391 24.500 L1392 26.500"/></g>
 <!-- grey icons row2 -->
 <g fill="none" stroke="#a9a9a9" stroke-width="1.200"><circle cx="1237" cy="25.500" r="1.600"/><path d="M1237 27.500 L1236.500 33 L1233 39.500 M1236.500 33 L1240.500 39.500 M1233.500 31.500 L1237 28.500 L1241 32"/>
  <circle cx="1302" cy="32" r="6.500"/><circle cx="1302" cy="32" r="1.800"/><path d="M1294 32 L1310 32 M1302 24 L1302 40 M1298.500 25 L1298.500 39"/></g>
 <text x="1152" y="35.800" font-family="Liberation Sans, sans-serif" font-size="12" fill="#000" textLength="14.500" lengthAdjust="spacingAndGlyphs">Go</text>

 <!-- row 3 (disabled) -->
 <g fill="#a9a9a9"><rect x="828" y="57.500" width="9" height="8"/><rect x="843" y="57.500" width="18" height="8"/></g>
 <g fill="none" stroke="#8db6f0" stroke-width="1.100"><circle cx="829" cy="67" r="5.500"/><path d="M833 71 L837 75"/><circle cx="852" cy="67" r="5.500"/><path d="M856 71 L860 75 M845.500 66 L845.500 71 M845.500 73 L845.500 74.500"/></g>
 <text x="845" y="64.500" font-family="Liberation Sans, sans-serif" font-size="8" font-weight="bold" fill="#fff">A</text>
 <g font-family="Liberation Sans, sans-serif" font-size="9" fill="#a9a9a9"><text x="871" y="66">A</text><text x="871" y="76">B</text><text x="896" y="66">A</text><text x="896" y="76">B</text></g>
 <g fill="none" stroke="#a9a9a9" stroke-width="1.100"><path d="M877.500 64 L882 64 C885 64 885 70 882 70 L878.500 70 M880 68.500 L878.500 70 L880 71.500 M879 62.500 L877.500 64 L879 65.500"/><path d="M902.500 64 L907 64 C910 64 910 70 907 70 L903.500 70 M905 68.500 L903.500 70 L905 71.500 M904 62.500 L902.500 64 L904 65.500"/></g>
 <g fill="none" stroke="#8db6f0" stroke-width="1.200"><path d="M885.500 62 L885.500 69 M885.500 71 L885.500 72.500 M910.500 62 L910.500 69 M910.500 71 L910.500 72.500 M893.500 65.500 L899 65.500 M895 64 L893.500 65.500 L895 67"/></g>
 <g fill="none" stroke="#a9a9a9" stroke-width="1"><path d="M932.500 58.500 L944 58.500 M932.500 62 L944 62 M932.500 69 L944 69 M932.500 72.500 L944 72.500 M926 65.500 L931 65.500 M929 63.500 L931 65.500 L929 67.500"/>
  <path d="M951 57.500 L969 57.500 M951 73.500 L969 73.500 M951 71 L960 71 M965.500 60.500 L965.500 68.500"/>
  <path d="M976 57.500 L994 57.500 M976 73.500 L986 73.500 M976 71 L985 71 M990.500 60.500 L990.500 67.500"/>
  <path d="M1001 58.500 L1019 58.500 M1001 62 L1016 62 M1001 69 L1016 69 M1001 72.500 L1016 72.500 M1001 65.500 L1006 65.500 M1004 63.500 L1006 65.500 L1004 67.500"/>
  <path d="M1026 58.500 L1044 58.500 M1026 62 L1041 62 M1026 69 L1041 69 M1026 72.500 L1041 72.500 M1027 65.500 L1032 65.500 M1029 63.500 L1027 65.500 L1029 67.500"/>
  <path d="M1051 57.500 L1069 57.500 M1051 60.500 L1069 60.500 M1051 71.500 L1069 71.500 M1051 74.500 L1069 74.500" stroke-dasharray="4 1"/>
  <path d="M1084 57.500 L1102 57.500 M1084 60.500 L1102 60.500 M1084 63.500 L1102 63.500 M1084 66.500 L1100 66.500 M1092 71 L1095.500 74.500 L1102 68"/>
  <path d="M1109 57.500 L1118 57.500 M1109 60.500 L1118 60.500 M1109 63.500 L1114 63.500"/><ellipse cx="1120.500" cy="68.500" rx="3" ry="4"/><path d="M1117.500 66 L1114.500 63.500 M1123.500 66 L1126.500 63.500 M1117.500 69 L1114 69 M1123.500 69 L1127 69 M1118 71.500 L1115 74.500 M1123 71.500 L1126 74.500"/>
 </g>
 <g fill="#9ec0f5"><rect x="932.500" y="64.500" width="11.500" height="2"/><rect x="952" y="60.500" width="8" height="8.500"/><rect x="977" y="60" width="7.500" height="9.500"/><rect x="1007.500" y="64" width="11.500" height="3"/><rect x="1032.500" y="64" width="11.500" height="3"/></g>
 <circle cx="965.500" cy="71" r="1.200" fill="#a9a9a9"/>
 <path d="M988 69 L994 75 M994 69 L988 75" stroke="#f2a08c" stroke-width="1" fill="none"/>
 <text x="1051.500" y="70" font-family="Liberation Sans, sans-serif" font-size="8" fill="#a9a9a9" textLength="17" lengthAdjust="spacingAndGlyphs">GUID</text>
</svg>
<!-- blue window edge -->
<div class="a" style="left:826.500px;top:0;width:1.500px;height:871px;background:#1c7ad9"></div>

<!-- 3D VIEW -->
<svg style="left:828px;top:106px" width="582" height="765" viewBox="828 106 582 765">
<defs>
<clipPath id="cv"><rect x="828" y="106" width="582" height="765"/></clipPath>
<clipPath id="cl"><path d="M828 273.8 L1173 345 L1173 935 L828 863.8 Z"/></clipPath>
<clipPath id="cr"><path d="M1173 345 L1412 206.4 L1412 796.4 L1173 935 Z"/></clipPath>
<linearGradient id="gl" x1="0" y1="0" x2="0" y2="1"><stop offset="0" stop-color="#c5d0c5"/><stop offset="1" stop-color="#c2cdc2"/></linearGradient>
</defs>
<g clip-path="url(#cv)">
<g clip-path="url(#cl)"><path d="M828 273.8 L1173 345 L1173 935 L828 863.8 Z" fill="#907c5b"/>
<path fill="#8e5a3c" d="M977.7 305.6L1022.1 314.7v12.9L977.7 318.5ZM1094 344.3L1138.4 353.5v12.9L1094 357.2ZM954.8 315.5L999.2 324.7v12.9L954.8 328.4ZM931.3 325.4L975.7 334.6v12.9L931.3 338.3ZM1001.2 354.5L1045.6 363.7v12.9L1001.2 367.4ZM815.6 316.2L860 325.4v12.9L815.6 329.1ZM1116.9 393.1L1161.3 402.3v12.9L1116.9 406ZM792.1 355.4L836.5 364.6v12.9L792.1 368.3ZM1094 491.3L1138.4 500.5v12.9L1094 504.2ZM954.8 491.9L999.2 501.1v12.9L954.8 504.8ZM1140.4 559.7L1173 566.4v12.9L1140.4 572.6ZM815.6 492.6L860 501.8v12.9L815.6 505.5ZM908.4 570.6L952.8 579.7v12.9L908.4 583.5ZM1024.1 609.2L1068.5 618.3v12.9L1024.1 622.1ZM1116.9 657.7L1161.3 666.9v12.9L1116.9 670.6ZM954.8 638.9L999.2 648.1v12.9L954.8 651.8ZM931.3 648.8L975.7 658v12.9L931.3 661.7ZM838.5 629.6L882.9 638.8v12.9L838.5 642.5ZM908.4 658.8L952.8 667.9v12.9L908.4 671.7ZM1094 755.9L1138.4 765.1v12.9L1094 768.8ZM1163.3 784.9L1173 786.9v12.9L1163.3 797.8ZM1001.2 795.5L1045.6 804.7v12.9L1001.2 808.4ZM954.8 785.9L999.2 795.1v12.9L954.8 798.8ZM1070.5 853.9L1114.9 863.1v12.9L1070.5 866.8ZM1001.2 883.7L1045.6 892.9v12.9L1001.2 896.6Z"/>
<path fill="#8d593b" d="M931.3 296L975.7 305.2v12.9L931.3 308.9ZM838.5 276.8L882.9 286v12.9L838.5 289.7ZM908.4 306L952.8 315.1v12.9L908.4 318.9ZM1163.3 373.3L1173 375.3v12.9L1163.3 386.2ZM1070.5 354.1L1114.9 363.3v12.9L1070.5 367ZM838.5 306.2L882.9 315.4v12.9L838.5 319.1ZM792.1 326L836.5 335.2v12.9L792.1 338.9ZM908.4 364.8L952.8 373.9v12.9L908.4 377.7ZM1024.1 403.4L1068.5 412.5v12.9L1024.1 416.3ZM884.9 374.6L929.3 383.8v12.9L884.9 387.5ZM792.1 384.8L836.5 394v12.9L792.1 397.7ZM1116.9 481.3L1161.3 490.5v12.9L1116.9 494.2ZM1070.5 471.7L1114.9 480.9v12.9L1070.5 484.6ZM1001.2 472.1L1045.6 481.3v12.9L1001.2 485ZM884.9 462.8L929.3 472v12.9L884.9 475.7ZM838.5 453.2L882.9 462.4v12.9L838.5 466.1ZM1001.2 501.5L1045.6 510.7v12.9L1001.2 514.4ZM908.4 511.8L952.8 520.9v12.9L908.4 524.7ZM792.1 502.4L836.5 511.6v12.9L792.1 515.3ZM792.1 531.8L836.5 541v12.9L792.1 544.7ZM1140.4 677.3L1173 684v12.9L1140.4 690.2ZM862 619.8L906.4 628.9v12.9L862 632.7ZM1070.5 677.5L1114.9 686.7v12.9L1070.5 690.4ZM884.9 639.2L929.3 648.4v12.9L884.9 652.1ZM1047.6 687.5L1092 696.7v12.9L1047.6 700.4ZM862 649.2L906.4 658.3v12.9L862 662.1ZM1140.4 736.1L1173 742.8v12.9L1140.4 749ZM1094 726.5L1138.4 735.7v12.9L1094 739.4ZM815.6 669L860 678.2v12.9L815.6 681.9ZM1116.9 745.9L1161.3 755.1v12.9L1116.9 758.8ZM977.7 746.6L1022.1 755.7v12.9L977.7 759.5ZM792.1 767L836.5 776.2v12.9L792.1 779.9ZM1094 844.1L1138.4 853.3v12.9L1094 857ZM838.5 806L882.9 815.2v12.9L838.5 818.9ZM1140.4 883.1L1173 889.8v12.9L1140.4 896ZM1116.9 892.9L1161.3 902.1v12.9L1116.9 905.8ZM838.5 835.4L882.9 844.6v12.9L838.5 848.3Z"/>
<path fill="#895639" d="M1116.9 334.3L1161.3 343.5v12.9L1116.9 347.2ZM1024.1 374L1068.5 383.1v12.9L1024.1 386.9ZM884.9 345.2L929.3 354.4v12.9L884.9 358.1ZM954.8 374.3L999.2 383.5v12.9L954.8 387.2ZM931.3 413.6L975.7 422.8v12.9L931.3 426.5ZM931.3 443L975.7 452.2v12.9L931.3 455.9ZM838.5 423.8L882.9 433v12.9L838.5 436.7ZM1001.2 530.9L1045.6 540.1v12.9L1001.2 543.8ZM1070.5 559.9L1114.9 569.1v12.9L1070.5 572.8ZM1140.4 589.1L1173 595.8v12.9L1140.4 602ZM908.4 541.2L952.8 550.3v12.9L908.4 554.1ZM838.5 541.4L882.9 550.6v12.9L838.5 554.3ZM1140.4 618.5L1173 625.2v12.9L1140.4 631.4ZM1094 608.9L1138.4 618.1v12.9L1094 621.8ZM1163.3 637.9L1173 639.9v12.9L1163.3 650.8ZM977.7 599.6L1022.1 608.7v12.9L977.7 612.5ZM1047.6 628.7L1092 637.9v12.9L1047.6 641.6ZM1116.9 687.1L1161.3 696.3v12.9L1116.9 700ZM1140.4 706.7L1173 713.4v12.9L1140.4 719.6ZM1070.5 706.9L1114.9 716.1v12.9L1070.5 719.8ZM1163.3 755.5L1173 757.5v12.9L1163.3 768.4ZM792.1 678.8L836.5 688v12.9L792.1 691.7ZM908.4 717.6L952.8 726.7v12.9L908.4 730.5ZM1140.4 794.9L1173 801.6v12.9L1140.4 807.8ZM908.4 835.2L952.8 844.3v12.9L908.4 848.1ZM1140.4 912.5L1173 919.2v12.9L1140.4 925.4ZM1094 902.9L1138.4 912.1v12.9L1094 915.8ZM1047.6 893.3L1092 902.5v12.9L1047.6 906.2ZM954.8 874.1L999.2 883.3v12.9L954.8 887ZM1163.3 931.9L1173 933.9v12.9L1163.3 944.8ZM884.9 874.4L929.3 883.6v12.9L884.9 887.3Z"/>
<path fill="#925e40" d="M1001.2 325.1L1045.6 334.3v12.9L1001.2 338ZM1116.9 363.7L1161.3 372.9v12.9L1116.9 376.6ZM792.1 296.6L836.5 305.8v12.9L792.1 309.5ZM1163.3 402.7L1173 404.7v12.9L1163.3 415.6ZM1116.9 422.5L1161.3 431.7v12.9L1116.9 435.4ZM1094 432.5L1138.4 441.7v12.9L1094 445.4ZM977.7 423.2L1022.1 432.3v12.9L977.7 436.1ZM838.5 394.4L882.9 403.6v12.9L838.5 407.3ZM1163.3 579.1L1173 581.1v12.9L1163.3 592ZM977.7 540.8L1022.1 549.9v12.9L977.7 553.7ZM884.9 551L929.3 560.2v12.9L884.9 563.9ZM1047.6 599.3L1092 608.5v12.9L1047.6 612.2ZM954.8 580.1L999.2 589.3v12.9L954.8 593ZM908.4 629.4L952.8 638.5v12.9L908.4 642.3ZM815.6 610.2L860 619.4v12.9L815.6 623.1ZM815.6 639.6L860 648.8v12.9L815.6 652.5ZM1047.6 746.3L1092 755.5v12.9L1047.6 759.2ZM1047.6 775.7L1092 784.9v12.9L1047.6 788.6ZM1163.3 814.3L1173 816.3v12.9L1163.3 827.2ZM1070.5 795.1L1114.9 804.3v12.9L1070.5 808ZM1024.1 785.6L1068.5 794.7v12.9L1024.1 798.5ZM884.9 756.8L929.3 766v12.9L884.9 769.7ZM838.5 747.2L882.9 756.4v12.9L838.5 760.1ZM1163.3 843.7L1173 845.7v12.9L1163.3 856.6ZM1140.4 853.7L1173 860.4v12.9L1140.4 866.6ZM1047.6 834.5L1092 843.7v12.9L1047.6 847.4ZM954.8 815.3L999.2 824.5v12.9L954.8 828.2ZM862 796.2L906.4 805.3v12.9L862 809.1ZM1001.2 854.3L1045.6 863.5v12.9L1001.2 867.2Z"/>
<path fill="#8b583a" d="M977.7 364.4L1022.1 373.5v12.9L977.7 377.3ZM1094 403.1L1138.4 412.3v12.9L1094 416ZM1024.1 432.8L1068.5 441.9v12.9L1024.1 445.7ZM1094 461.9L1138.4 471.1v12.9L1094 474.8ZM815.6 404.4L860 413.6v12.9L815.6 417.3ZM792.1 443.6L836.5 452.8v12.9L792.1 456.5ZM815.6 463.2L860 472.4v12.9L815.6 476.1ZM977.7 511.4L1022.1 520.5v12.9L977.7 524.3ZM1116.9 569.5L1161.3 578.7v12.9L1116.9 582.4ZM954.8 550.7L999.2 559.9v12.9L954.8 563.6ZM1163.3 608.5L1173 610.5v12.9L1163.3 621.4ZM1116.9 628.3L1161.3 637.5v12.9L1116.9 641.2ZM1070.5 618.7L1114.9 627.9v12.9L1070.5 631.6ZM977.7 687.8L1022.1 696.9v12.9L977.7 700.7ZM862 678.6L906.4 687.7v12.9L862 691.5ZM931.3 707.6L975.7 716.8v12.9L931.3 720.5ZM1070.5 765.7L1114.9 774.9v12.9L1070.5 778.6ZM884.9 727.4L929.3 736.6v12.9L884.9 740.3ZM908.4 776.4L952.8 785.5v12.9L908.4 789.3ZM815.6 757.2L860 766.4v12.9L815.6 770.1Z"/>
<path fill="#835236" d="M1163.3 343.9L1173 345.9v12.9L1163.3 356.8ZM792.1 267.2L836.5 276.4v12.9L792.1 280.1ZM1070.5 412.9L1114.9 422.1v12.9L1070.5 425.8ZM862 384.6L906.4 393.7v12.9L862 397.5ZM1070.5 442.3L1114.9 451.5v12.9L1070.5 455.2ZM954.8 433.1L999.2 442.3v12.9L954.8 446ZM884.9 433.4L929.3 442.6v12.9L884.9 446.3ZM862 443.4L906.4 452.5v12.9L862 456.3ZM815.6 433.8L860 443v12.9L815.6 446.7ZM1116.9 510.7L1161.3 519.9v12.9L1116.9 523.6ZM792.1 473L836.5 482.2v12.9L792.1 485.9ZM1047.6 540.5L1092 549.7v12.9L1047.6 553.4ZM1024.1 579.8L1068.5 588.9v12.9L1024.1 592.7ZM838.5 570.8L882.9 580v12.9L838.5 583.7ZM1094 638.3L1138.4 647.5v12.9L1094 651.2ZM1024.1 668L1068.5 677.1v12.9L1024.1 680.9ZM1001.2 677.9L1045.6 687.1v12.9L1001.2 690.8ZM931.3 678.2L975.7 687.4v12.9L931.3 691.1ZM838.5 659L882.9 668.2v12.9L838.5 671.9ZM1024.1 726.8L1068.5 735.9v12.9L1024.1 739.7ZM954.8 727.1L999.2 736.3v12.9L954.8 740ZM792.1 708.2L836.5 717.4v12.9L792.1 721.1ZM1094 785.3L1138.4 794.5v12.9L1094 798.2ZM862 737.4L906.4 746.5v12.9L862 750.3ZM1094 814.7L1138.4 823.9v12.9L1094 827.6ZM1024.1 815L1068.5 824.1v12.9L1024.1 827.9ZM884.9 786.2L929.3 795.4v12.9L884.9 799.1ZM838.5 776.6L882.9 785.8v12.9L838.5 789.5ZM908.4 805.8L952.8 814.9v12.9L908.4 818.7ZM931.3 825.2L975.7 834.4v12.9L931.3 838.1ZM1163.3 902.5L1173 904.5v12.9L1163.3 915.4ZM931.3 884L975.7 893.2v12.9L931.3 896.9Z"/>
<path fill="#956042" d="M1070.5 324.7L1114.9 333.9v12.9L1070.5 337.6ZM862 296.4L906.4 305.5v12.9L862 309.3ZM815.6 286.8L860 296v12.9L815.6 299.7ZM977.7 335L1022.1 344.1v12.9L977.7 347.9ZM862 325.8L906.4 334.9v12.9L862 338.7ZM931.3 354.8L975.7 364v12.9L931.3 367.7ZM908.4 394.2L952.8 403.3v12.9L908.4 407.1ZM977.7 452.6L1022.1 461.7v12.9L977.7 465.5ZM1140.4 500.9L1173 507.6v12.9L1140.4 513.8ZM884.9 492.2L929.3 501.4v12.9L884.9 505.1ZM931.3 531.2L975.7 540.4v12.9L931.3 544.1ZM884.9 521.6L929.3 530.8v12.9L884.9 534.5ZM1047.6 569.9L1092 579.1v12.9L1047.6 582.8ZM862 531.6L906.4 540.7v12.9L862 544.5ZM1070.5 589.3L1114.9 598.5v12.9L1070.5 602.2ZM931.3 560.6L975.7 569.8v12.9L931.3 573.5ZM931.3 590L975.7 599.2v12.9L931.3 602.9ZM931.3 619.4L975.7 628.6v12.9L931.3 632.3ZM884.9 609.8L929.3 619v12.9L884.9 622.7ZM838.5 600.2L882.9 609.4v12.9L838.5 613.1ZM792.1 590.6L836.5 599.8v12.9L792.1 603.5ZM1001.2 648.5L1045.6 657.7v12.9L1001.2 661.4ZM1116.9 716.5L1161.3 725.7v12.9L1116.9 729.4ZM977.7 776L1022.1 785.1v12.9L977.7 788.9ZM1094 873.5L1138.4 882.7v12.9L1094 886.4ZM862 825.6L906.4 834.7v12.9L862 838.5ZM1024.1 873.8L1068.5 882.9v12.9L1024.1 886.7ZM931.3 854.6L975.7 863.8v12.9L931.3 867.5Z"/>
<path fill="#905c3e" d="M1047.6 422.9L1092 432.1v12.9L1047.6 435.8ZM815.6 375L860 384.2v12.9L815.6 387.9ZM1116.9 451.9L1161.3 461.1v12.9L1116.9 464.8ZM1001.2 442.7L1045.6 451.9v12.9L1001.2 455.6ZM862 414L906.4 423.1v12.9L862 426.9ZM792.1 414.2L836.5 423.4v12.9L792.1 427.1ZM1024.1 491.6L1068.5 500.7v12.9L1024.1 504.5ZM931.3 472.4L975.7 481.6v12.9L931.3 485.3ZM1140.4 530.3L1173 537v12.9L1140.4 543.2ZM1024.1 521L1068.5 530.1v12.9L1024.1 533.9ZM1094 550.1L1138.4 559.3v12.9L1094 563ZM862 502.2L906.4 511.3v12.9L862 515.1ZM838.5 512L882.9 521.2v12.9L838.5 524.9ZM1094 579.5L1138.4 588.7v12.9L1094 592.4ZM862 561L906.4 570.1v12.9L862 573.9ZM1070.5 648.1L1114.9 657.3v12.9L1070.5 661ZM1094 667.7L1138.4 676.9v12.9L1094 680.6ZM1163.3 696.7L1173 698.7v12.9L1163.3 709.6ZM792.1 649.4L836.5 658.6v12.9L792.1 662.3ZM1047.6 716.9L1092 726.1v12.9L1047.6 729.8ZM1001.2 707.3L1045.6 716.5v12.9L1001.2 720.2ZM954.8 697.7L999.2 706.9v12.9L954.8 710.6ZM908.4 688.2L952.8 697.3v12.9L908.4 701.1ZM884.9 698L929.3 707.2v12.9L884.9 710.9ZM1140.4 824.3L1173 831v12.9L1140.4 837.2ZM862 766.8L906.4 775.9v12.9L862 779.7ZM977.7 805.4L1022.1 814.5v12.9L977.7 818.3ZM1001.2 824.9L1045.6 834.1v12.9L1001.2 837.8ZM815.6 786.6L860 795.8v12.9L815.6 799.5ZM1024.1 844.4L1068.5 853.5v12.9L1024.1 857.3ZM954.8 844.7L999.2 853.9v12.9L954.8 857.6ZM977.7 864.2L1022.1 873.3v12.9L977.7 877.1ZM862 855L906.4 864.1v12.9L862 867.9ZM1024.1 903.2L1068.5 912.3v12.9L1024.1 916.1Z"/>
<path fill="#875833" d="M884.9 286.4L929.3 295.6v12.9L884.9 299.3ZM1047.6 334.7L1092 343.9v12.9L1047.6 347.6ZM1024.1 344.6L1068.5 353.7v12.9L1024.1 357.5ZM1070.5 383.5L1114.9 392.7v12.9L1070.5 396.4ZM838.5 335.6L882.9 344.8v12.9L838.5 348.5ZM1047.6 393.5L1092 402.7v12.9L1047.6 406.4ZM977.7 393.8L1022.1 402.9v12.9L977.7 406.7ZM954.8 403.7L999.2 412.9v12.9L954.8 416.6ZM1047.6 452.3L1092 461.5v12.9L1047.6 465.2ZM1024.1 462.2L1068.5 471.3v12.9L1024.1 475.1ZM954.8 462.5L999.2 471.7v12.9L954.8 475.4ZM1001.2 560.3L1045.6 569.5v12.9L1001.2 573.2ZM815.6 522L860 531.2v12.9L815.6 534.9ZM884.9 580.4L929.3 589.6v12.9L884.9 593.3ZM954.8 609.5L999.2 618.7v12.9L954.8 622.4ZM977.7 629L1022.1 638.1v12.9L977.7 641.9ZM1094 697.1L1138.4 706.3v12.9L1094 710ZM1140.4 765.5L1173 772.2v12.9L1140.4 778.4ZM1001.2 736.7L1045.6 745.9v12.9L1001.2 749.6ZM815.6 698.4L860 707.6v12.9L815.6 711.3ZM1116.9 775.3L1161.3 784.5v12.9L1116.9 788.2ZM838.5 717.8L882.9 727v12.9L838.5 730.7ZM1001.2 766.1L1045.6 775.3v12.9L1001.2 779ZM954.8 756.5L999.2 765.7v12.9L954.8 769.4ZM908.4 747L952.8 756.1v12.9L908.4 759.9ZM792.1 737.6L836.5 746.8v12.9L792.1 750.5ZM838.5 864.8L882.9 874v12.9L838.5 877.7ZM792.1 855.2L836.5 864.4v12.9L792.1 868.1Z"/>
<path fill="#7f5c30" d="M1140.4 353.9L1173 360.6v12.9L1140.4 366.8ZM884.9 315.8L929.3 325v12.9L884.9 328.7ZM1047.6 364.1L1092 373.3v12.9L1047.6 377ZM954.8 344.9L999.2 354.1v12.9L954.8 357.8ZM908.4 335.4L952.8 344.5v12.9L908.4 348.3ZM1140.4 412.7L1173 419.4v12.9L1140.4 425.6ZM862 355.2L906.4 364.3v12.9L862 368.1ZM815.6 345.6L860 354.8v12.9L815.6 358.5ZM838.5 365L882.9 374.2v12.9L838.5 377.9ZM1140.4 442.1L1173 448.8v12.9L1140.4 455ZM1163.3 461.5L1173 463.5v12.9L1163.3 474.4ZM1140.4 471.5L1173 478.2v12.9L1140.4 484.4ZM1163.3 490.9L1173 492.9v12.9L1163.3 503.8ZM908.4 453L952.8 462.1v12.9L908.4 465.9ZM1070.5 501.1L1114.9 510.3v12.9L1070.5 514ZM977.7 482L1022.1 491.1v12.9L977.7 494.9ZM1116.9 540.1L1161.3 549.3v12.9L1116.9 553ZM954.8 521.3L999.2 530.5v12.9L954.8 534.2ZM815.6 551.4L860 560.6v12.9L815.6 564.3ZM792.1 561.2L836.5 570.4v12.9L792.1 574.1ZM1140.4 647.9L1173 654.6v12.9L1140.4 660.8ZM908.4 600L952.8 609.1v12.9L908.4 612.9ZM977.7 658.4L1022.1 667.5v12.9L977.7 671.3ZM792.1 620L836.5 629.2v12.9L792.1 632.9ZM954.8 668.3L999.2 677.5v12.9L954.8 681.2ZM1163.3 726.1L1173 728.1v12.9L1163.3 739ZM884.9 668.6L929.3 677.8v12.9L884.9 681.5ZM1116.9 804.7L1161.3 813.9v12.9L1116.9 817.6ZM1070.5 824.5L1114.9 833.7v12.9L1070.5 837.4ZM1163.3 873.1L1173 875.1v12.9L1163.3 886ZM1116.9 863.5L1161.3 872.7v12.9L1116.9 876.4ZM908.4 864.6L952.8 873.7v12.9L908.4 877.5ZM1116.9 922.3L1161.3 931.5v12.9L1116.9 935.2ZM1070.5 912.7L1114.9 921.9v12.9L1070.5 925.6Z"/>
<path fill="#8c573a" d="M1024.1 315.2L1068.5 324.3v12.9L1024.1 328.1ZM1140.4 383.3L1173 390v12.9L1140.4 396.2ZM1094 373.7L1138.4 382.9v12.9L1094 386.6ZM1001.2 383.9L1045.6 393.1v12.9L1001.2 396.8ZM1163.3 432.1L1173 434.1v12.9L1163.3 445ZM1001.2 413.3L1045.6 422.5v12.9L1001.2 426.2ZM1047.6 481.7L1092 490.9v12.9L1047.6 494.6ZM1047.6 511.1L1092 520.3v12.9L1047.6 524ZM1163.3 549.7L1173 551.7v12.9L1163.3 562.6ZM1070.5 530.5L1114.9 539.7v12.9L1070.5 543.4ZM838.5 482.6L882.9 491.8v12.9L838.5 495.5ZM977.7 570.2L1022.1 579.3v12.9L977.7 583.1ZM1001.2 589.7L1045.6 598.9v12.9L1001.2 602.6ZM862 590.4L906.4 599.5v12.9L862 603.3ZM815.6 580.8L860 590v12.9L815.6 593.7ZM1024.1 638.6L1068.5 647.7v12.9L1024.1 651.5ZM1047.6 658.1L1092 667.3v12.9L1047.6 671ZM1024.1 697.4L1068.5 706.5v12.9L1024.1 710.3ZM1024.1 756.2L1068.5 765.3v12.9L1024.1 769.1ZM815.6 727.8L860 737v12.9L815.6 740.7ZM977.7 834.8L1022.1 843.9v12.9L977.7 847.7ZM884.9 815.6L929.3 824.8v12.9L884.9 828.5ZM792.1 796.4L836.5 805.6v12.9L792.1 809.3ZM815.6 816L860 825.2v12.9L815.6 828.9ZM815.6 845.4L860 854.6v12.9L815.6 858.3ZM977.7 893.6L1022.1 902.7v12.9L977.7 906.5Z"/>
<path fill="#915b3d" d="M931.3 384.2L975.7 393.4v12.9L931.3 397.1ZM884.9 404L929.3 413.2v12.9L884.9 416.9ZM908.4 423.6L952.8 432.7v12.9L908.4 436.5ZM1163.3 520.3L1173 522.3v12.9L1163.3 533.2ZM1094 520.7L1138.4 529.9v12.9L1094 533.6ZM908.4 482.4L952.8 491.5v12.9L908.4 495.3ZM862 472.8L906.4 481.9v12.9L862 485.7ZM931.3 501.8L975.7 511v12.9L931.3 514.7ZM1024.1 550.4L1068.5 559.5v12.9L1024.1 563.3ZM1116.9 598.9L1161.3 608.1v12.9L1116.9 611.8ZM1001.2 619.1L1045.6 628.3v12.9L1001.2 632ZM1163.3 667.3L1173 669.3v12.9L1163.3 680.2ZM1070.5 736.3L1114.9 745.5v12.9L1070.5 749.2ZM977.7 717.2L1022.1 726.3v12.9L977.7 730.1ZM838.5 688.4L882.9 697.6v12.9L838.5 701.3ZM862 708L906.4 717.1v12.9L862 720.9ZM931.3 737L975.7 746.2v12.9L931.3 749.9ZM931.3 766.4L975.7 775.6v12.9L931.3 779.3ZM1047.6 805.1L1092 814.3v12.9L1047.6 818ZM1116.9 834.1L1161.3 843.3v12.9L1116.9 847ZM931.3 795.8L975.7 805v12.9L931.3 808.7ZM1047.6 863.9L1092 873.1v12.9L1047.6 876.8ZM1070.5 883.3L1114.9 892.5v12.9L1070.5 896.2ZM884.9 845L929.3 854.2v12.9L884.9 857.9ZM792.1 825.8L836.5 835v12.9L792.1 838.7Z"/>
</g>
<g clip-path="url(#cr)"><path d="M1173 345 L1412 206.4 L1412 796.4 L1173 935 Z" fill="#7b6a4d"/>
<path fill="#754a33" d="M1194.1 333.7L1220.3 318.5v12.9L1194.1 346.6ZM1221.9 317.5L1248.1 302.3v12.9L1221.9 330.4ZM1207.9 340.4L1234.1 325.2v12.9L1207.9 353.3ZM1277.5 314.7L1303.7 299.5v12.9L1277.5 327.6ZM1374.7 273L1400.9 257.8v12.9L1374.7 285.9ZM1221.9 376.3L1248.1 361.1v12.9L1221.9 389.2ZM1180.1 415.3L1206.3 400.1v12.9L1180.1 428.2ZM1173 434.1L1192.5 422.8v12.9L1173 447ZM1277.5 373.5L1303.7 358.3v12.9L1277.5 386.4ZM1416.5 292.9L1442.7 277.7v12.9L1416.5 305.8ZM1346.9 436.1L1373.1 420.9v12.9L1346.9 449ZM1249.7 507.2L1275.9 492v12.9L1249.7 520.1ZM1346.9 465.5L1373.1 450.3v12.9L1346.9 478.4ZM1263.5 543.3L1289.7 528.1v12.9L1263.5 556.2ZM1173 610.5L1192.5 599.2v12.9L1173 623.4ZM1180.1 621.1L1206.3 605.9v12.9L1180.1 634ZM1374.7 508.2L1400.9 493v12.9L1374.7 521.1ZM1305.3 563.2L1331.5 548v12.9L1305.3 576.1ZM1173 669.3L1192.5 658v12.9L1173 682.2ZM1221.9 640.9L1248.1 625.7v12.9L1221.9 653.8ZM1249.7 624.8L1275.9 609.6v12.9L1249.7 637.7ZM1277.5 608.7L1303.7 593.5v12.9L1277.5 621.6ZM1263.5 660.9L1289.7 645.7v12.9L1263.5 673.8ZM1319.1 628.7L1345.3 613.5v12.9L1319.1 641.6ZM1249.7 683.6L1275.9 668.4v12.9L1249.7 696.5ZM1263.5 690.3L1289.7 675.1v12.9L1263.5 703.2ZM1173 757.5L1192.5 746.2v12.9L1173 770.4ZM1360.9 648.5L1387.1 633.3v12.9L1360.9 661.4ZM1207.9 752L1234.1 736.8v12.9L1207.9 764.9ZM1249.7 742.4L1275.9 727.2v12.9L1249.7 755.3ZM1173 801.6L1178.5 798.4v12.9L1173 814.5ZM1207.9 781.4L1234.1 766.2v12.9L1207.9 794.3ZM1263.5 778.5L1289.7 763.3v12.9L1263.5 791.4ZM1333.1 752.8L1359.3 737.6v12.9L1333.1 765.7ZM1291.3 791.8L1317.5 776.6v12.9L1291.3 804.7ZM1319.1 775.7L1345.3 760.5v12.9L1319.1 788.6ZM1277.5 814.5L1303.7 799.3v12.9L1277.5 827.4ZM1333.1 782.2L1359.3 767v12.9L1333.1 795.1ZM1235.7 853.4L1261.9 838.2v12.9L1235.7 866.3ZM1221.9 905.5L1248.1 890.3v12.9L1221.9 918.4Z"/>
<path fill="#744932" d="M1305.3 269.2L1331.5 254v12.9L1305.3 282.1ZM1416.5 263.5L1442.7 248.3v12.9L1416.5 276.4ZM1374.7 302.4L1400.9 287.2v12.9L1374.7 315.3ZM1305.3 357.4L1331.5 342.2v12.9L1305.3 370.3ZM1173 448.8L1178.5 445.6v12.9L1173 461.7ZM1263.5 425.7L1289.7 410.5v12.9L1263.5 438.6ZM1374.7 361.2L1400.9 346v12.9L1374.7 374.1ZM1221.9 464.5L1248.1 449.3v12.9L1221.9 477.4ZM1333.1 400L1359.3 384.8v12.9L1333.1 412.9ZM1374.7 390.6L1400.9 375.4v12.9L1374.7 403.5ZM1263.5 484.5L1289.7 469.3v12.9L1263.5 497.4ZM1173 566.4L1178.5 563.2v12.9L1173 579.3ZM1180.1 562.3L1206.3 547.1v12.9L1180.1 575.2ZM1235.7 530L1261.9 514.8v12.9L1235.7 542.9ZM1263.5 513.9L1289.7 498.7v12.9L1263.5 526.8ZM1207.9 575.6L1234.1 560.4v12.9L1207.9 588.5ZM1374.7 478.8L1400.9 463.6v12.9L1374.7 491.7ZM1221.9 582.1L1248.1 566.9v12.9L1221.9 595ZM1277.5 549.9L1303.7 534.7v12.9L1277.5 562.8ZM1360.9 501.5L1387.1 486.3v12.9L1360.9 514.4ZM1416.5 469.3L1442.7 454.1v12.9L1416.5 482.2ZM1221.9 611.5L1248.1 596.3v12.9L1221.9 624.4ZM1235.7 647.6L1261.9 632.4v12.9L1235.7 660.5ZM1346.9 612.5L1373.1 597.3v12.9L1346.9 625.4ZM1277.5 667.5L1303.7 652.3v12.9L1277.5 680.4ZM1291.3 703.6L1317.5 688.4v12.9L1291.3 716.5ZM1277.5 726.3L1303.7 711.1v12.9L1277.5 739.2ZM1333.1 694L1359.3 678.8v12.9L1333.1 706.9ZM1346.9 700.7L1373.1 685.5v12.9L1346.9 713.6ZM1263.5 807.9L1289.7 792.7v12.9L1263.5 820.8ZM1173 875.1L1192.5 863.8v12.9L1173 888ZM1291.3 821.2L1317.5 806v12.9L1291.3 834.1ZM1402.5 756.7L1428.7 741.5v12.9L1402.5 769.6ZM1221.9 876.1L1248.1 860.9v12.9L1221.9 889ZM1360.9 795.5L1387.1 780.3v12.9L1360.9 808.4ZM1374.7 802.2L1400.9 787v12.9L1374.7 815.1ZM1360.9 824.9L1387.1 809.7v12.9L1360.9 837.8Z"/>
<path fill="#6f462f" d="M1173 345.9L1192.5 334.6v12.9L1173 358.8ZM1388.7 220.8L1414.9 205.6v12.9L1388.7 233.7ZM1249.7 330.8L1275.9 315.6v12.9L1249.7 343.7ZM1235.7 353.6L1261.9 338.4v12.9L1235.7 366.5ZM1291.3 321.4L1317.5 306.2v12.9L1291.3 334.3ZM1173 404.7L1192.5 393.4v12.9L1173 417.6ZM1249.7 360.2L1275.9 345v12.9L1249.7 373.1ZM1277.5 344.1L1303.7 328.9v12.9L1277.5 357ZM1305.3 328L1331.5 312.8v12.9L1305.3 340.9ZM1207.9 458L1234.1 442.8v12.9L1207.9 470.9ZM1360.9 383.9L1387.1 368.7v12.9L1360.9 396.8ZM1207.9 487.4L1234.1 472.2v12.9L1207.9 500.3ZM1263.5 455.1L1289.7 439.9v12.9L1263.5 468ZM1194.1 510.1L1220.3 494.9v12.9L1194.1 523ZM1277.5 461.7L1303.7 446.5v12.9L1277.5 474.6ZM1374.7 449.4L1400.9 434.2v12.9L1374.7 462.3ZM1173 581.1L1192.5 569.8v12.9L1173 594ZM1305.3 504.4L1331.5 489.2v12.9L1305.3 517.3ZM1319.1 511.1L1345.3 495.9v12.9L1319.1 524ZM1346.9 524.3L1373.1 509.1v12.9L1346.9 537.2ZM1249.7 595.4L1275.9 580.2v12.9L1249.7 608.3ZM1333.1 547L1359.3 531.8v12.9L1333.1 559.9ZM1346.9 553.7L1373.1 538.5v12.9L1346.9 566.6ZM1180.1 709.3L1206.3 694.1v12.9L1180.1 722.2ZM1291.3 644.8L1317.5 629.6v12.9L1291.3 657.7ZM1221.9 699.7L1248.1 684.5v12.9L1221.9 712.6ZM1319.1 658.1L1345.3 642.9v12.9L1319.1 671ZM1346.9 641.9L1373.1 626.7v12.9L1346.9 654.8ZM1180.1 768.1L1206.3 752.9v12.9L1180.1 781ZM1360.9 677.9L1387.1 662.7v12.9L1360.9 690.8ZM1173 816.3L1192.5 805v12.9L1173 829.2ZM1388.7 691.2L1414.9 676v12.9L1388.7 704.1ZM1235.7 794.6L1261.9 779.4v12.9L1235.7 807.5ZM1221.9 817.3L1248.1 802.1v12.9L1221.9 830.2ZM1346.9 759.5L1373.1 744.3v12.9L1346.9 772.4ZM1416.5 792.7L1442.7 777.5v12.9L1416.5 805.6Z"/>
<path fill="#7a4e36" d="M1173 360.6L1178.5 357.4v12.9L1173 373.5ZM1180.1 356.5L1206.3 341.3v12.9L1180.1 369.4ZM1263.5 308.1L1289.7 292.9v12.9L1263.5 321ZM1346.9 259.7L1373.1 244.5v12.9L1346.9 272.6ZM1194.1 421.9L1220.3 406.7v12.9L1194.1 434.8ZM1221.9 405.7L1248.1 390.5v12.9L1221.9 418.6ZM1346.9 347.9L1373.1 332.7v12.9L1346.9 360.8ZM1305.3 386.8L1331.5 371.6v12.9L1305.3 399.7ZM1173 478.2L1178.5 475v12.9L1173 491.1ZM1173 492.9L1192.5 481.6v12.9L1173 505.8ZM1249.7 448.4L1275.9 433.2v12.9L1249.7 461.3ZM1319.1 422.9L1345.3 407.7v12.9L1319.1 435.8ZM1249.7 477.8L1275.9 462.6v12.9L1249.7 490.7ZM1180.1 532.9L1206.3 517.7v12.9L1180.1 545.8ZM1207.9 546.2L1234.1 531v12.9L1207.9 559.1ZM1333.1 517.6L1359.3 502.4v12.9L1333.1 530.5ZM1194.1 627.7L1220.3 612.5v12.9L1194.1 640.6ZM1360.9 530.9L1387.1 515.7v12.9L1360.9 543.8ZM1207.9 634.4L1234.1 619.2v12.9L1207.9 647.3ZM1388.7 544.2L1414.9 529v12.9L1388.7 557.1ZM1180.1 679.9L1206.3 664.7v12.9L1180.1 692.8ZM1277.5 638.1L1303.7 622.9v12.9L1277.5 651ZM1305.3 622L1331.5 606.8v12.9L1305.3 634.9ZM1360.9 589.7L1387.1 574.5v12.9L1360.9 602.6ZM1180.1 738.7L1206.3 723.5v12.9L1180.1 751.6ZM1333.1 664.6L1359.3 649.4v12.9L1333.1 677.5ZM1416.5 616.3L1442.7 601.1v12.9L1416.5 629.2ZM1173 786.9L1192.5 775.6v12.9L1173 799.8ZM1194.1 774.7L1220.3 759.5v12.9L1194.1 787.6ZM1319.1 716.9L1345.3 701.7v12.9L1319.1 729.8ZM1235.7 824L1261.9 808.8v12.9L1235.7 836.9ZM1173 889.8L1178.5 886.6v12.9L1173 902.7ZM1416.5 763.3L1442.7 748.1v12.9L1416.5 776.2ZM1180.1 915.1L1206.3 899.9v12.9L1180.1 928ZM1207.9 899L1234.1 883.8v12.9L1207.9 911.9ZM1333.1 841L1359.3 825.8v12.9L1333.1 853.9Z"/>
<path fill="#724835" d="M1235.7 324.2L1261.9 309v12.9L1235.7 337.1ZM1291.3 292L1317.5 276.8v12.9L1291.3 304.9ZM1173 375.3L1192.5 364v12.9L1173 388.2ZM1249.7 389.6L1275.9 374.4v12.9L1249.7 402.5ZM1402.5 315.7L1428.7 300.5v12.9L1402.5 328.6ZM1388.7 338.4L1414.9 323.2v12.9L1388.7 351.3ZM1305.3 416.2L1331.5 401v12.9L1305.3 429.1ZM1235.7 471.2L1261.9 456v12.9L1235.7 484.1ZM1388.7 426.6L1414.9 411.4v12.9L1388.7 439.5ZM1291.3 497.8L1317.5 482.6v12.9L1291.3 510.7ZM1319.1 481.7L1345.3 466.5v12.9L1319.1 494.6ZM1402.5 433.3L1428.7 418.1v12.9L1402.5 446.2ZM1249.7 536.6L1275.9 521.4v12.9L1249.7 549.5ZM1235.7 559.4L1261.9 544.2v12.9L1235.7 572.3ZM1402.5 462.7L1428.7 447.5v12.9L1402.5 475.6ZM1249.7 566L1275.9 550.8v12.9L1249.7 578.9ZM1388.7 485.4L1414.9 470.2v12.9L1388.7 498.3ZM1291.3 556.6L1317.5 541.4v12.9L1291.3 569.5ZM1277.5 579.3L1303.7 564.1v12.9L1277.5 592.2ZM1388.7 514.8L1414.9 499.6v12.9L1388.7 527.7ZM1173 654.6L1178.5 651.4v12.9L1173 667.5ZM1235.7 618.2L1261.9 603v12.9L1235.7 631.1ZM1374.7 537.6L1400.9 522.4v12.9L1374.7 550.5ZM1194.1 657.1L1220.3 641.9v12.9L1194.1 670ZM1221.9 670.3L1248.1 655.1v12.9L1221.9 683.2ZM1173 728.1L1192.5 716.8v12.9L1173 741ZM1416.5 586.9L1442.7 571.7v12.9L1416.5 599.8ZM1235.7 706.4L1261.9 691.2v12.9L1235.7 719.3ZM1374.7 625.8L1400.9 610.6v12.9L1374.7 638.7ZM1194.1 745.3L1220.3 730.1v12.9L1194.1 758.2ZM1388.7 632.4L1414.9 617.2v12.9L1388.7 645.3ZM1346.9 671.3L1373.1 656.1v12.9L1346.9 684.2ZM1305.3 710.2L1331.5 695v12.9L1305.3 723.1ZM1235.7 765.2L1261.9 750v12.9L1235.7 778.1ZM1263.5 749.1L1289.7 733.9v12.9L1263.5 762ZM1416.5 675.1L1442.7 659.9v12.9L1416.5 688ZM1207.9 869.6L1234.1 854.4v12.9L1207.9 882.5ZM1333.1 811.6L1359.3 796.4v12.9L1333.1 824.5ZM1388.7 779.4L1414.9 764.2v12.9L1388.7 792.3ZM1194.1 921.7L1220.3 906.5v12.9L1194.1 934.6Z"/>
<path fill="#6b402c" d="M1402.5 227.5L1428.7 212.3v12.9L1402.5 240.4ZM1333.1 282.4L1359.3 267.2v12.9L1333.1 295.3ZM1207.9 399.2L1234.1 384v12.9L1207.9 412.1ZM1207.9 428.6L1234.1 413.4v12.9L1207.9 441.5ZM1346.9 377.3L1373.1 362.1v12.9L1346.9 390.2ZM1180.1 503.5L1206.3 488.3v12.9L1180.1 516.4ZM1416.5 381.1L1442.7 365.9v12.9L1416.5 394ZM1207.9 516.8L1234.1 501.6v12.9L1207.9 529.7ZM1235.7 500.6L1261.9 485.4v12.9L1235.7 513.5ZM1319.1 452.3L1345.3 437.1v12.9L1319.1 465.2ZM1374.7 420L1400.9 404.8v12.9L1374.7 432.9ZM1305.3 475L1331.5 459.8v12.9L1305.3 487.9ZM1180.1 591.7L1206.3 576.5v12.9L1180.1 604.6ZM1207.9 605L1234.1 589.8v12.9L1207.9 617.9ZM1402.5 521.5L1428.7 506.3v12.9L1402.5 534.4ZM1333.1 605.8L1359.3 590.6v12.9L1333.1 618.7ZM1235.7 677L1261.9 661.8v12.9L1235.7 689.9ZM1221.9 729.1L1248.1 713.9v12.9L1221.9 742ZM1249.7 713L1275.9 697.8v12.9L1249.7 725.9ZM1305.3 680.8L1331.5 665.6v12.9L1305.3 693.7ZM1173 772.2L1178.5 769v12.9L1173 785.1ZM1235.7 735.8L1261.9 720.6v12.9L1235.7 748.7ZM1305.3 739.6L1331.5 724.4v12.9L1305.3 752.5ZM1402.5 727.3L1428.7 712.1v12.9L1402.5 740.2Z"/>
<path fill="#7c5139" d="M1416.5 204.7L1442.7 189.5v12.9L1416.5 217.6ZM1221.9 346.9L1248.1 331.7v12.9L1221.9 359.8ZM1180.1 385.9L1206.3 370.7v12.9L1180.1 398.8ZM1235.7 441.8L1261.9 426.6v12.9L1235.7 454.7ZM1291.3 409.6L1317.5 394.4v12.9L1291.3 422.5ZM1194.1 480.7L1220.3 465.5v12.9L1194.1 493.6ZM1402.5 374.5L1428.7 359.3v12.9L1402.5 387.4ZM1333.1 429.4L1359.3 414.2v12.9L1333.1 442.3ZM1388.7 397.2L1414.9 382v12.9L1388.7 410.1ZM1173 537L1178.5 533.8v12.9L1173 549.9ZM1277.5 491.1L1303.7 475.9v12.9L1277.5 504ZM1194.1 568.9L1220.3 553.7v12.9L1194.1 581.8ZM1277.5 520.5L1303.7 505.3v12.9L1277.5 533.4ZM1346.9 494.9L1373.1 479.7v12.9L1346.9 507.8ZM1263.5 572.7L1289.7 557.5v12.9L1263.5 585.6ZM1319.1 599.3L1345.3 584.1v12.9L1319.1 612.2ZM1173 698.7L1192.5 687.4v12.9L1173 711.6ZM1207.9 693.2L1234.1 678v12.9L1207.9 706.1ZM1194.1 715.9L1220.3 700.7v12.9L1194.1 728.8ZM1333.1 635.2L1359.3 620v12.9L1333.1 648.1ZM1263.5 719.7L1289.7 704.5v12.9L1263.5 732.6ZM1388.7 661.8L1414.9 646.6v12.9L1388.7 674.7ZM1180.1 797.5L1206.3 782.3v12.9L1180.1 810.4ZM1277.5 755.7L1303.7 740.5v12.9L1277.5 768.6ZM1374.7 714L1400.9 698.8v12.9L1374.7 726.9ZM1194.1 862.9L1220.3 847.7v12.9L1194.1 875.8ZM1346.9 818.3L1373.1 803.1v12.9L1346.9 831.2Z"/>
<path fill="#774d34" d="M1360.9 266.3L1387.1 251.1v12.9L1360.9 279.2ZM1402.5 256.9L1428.7 241.7v12.9L1402.5 269.8ZM1333.1 311.8L1359.3 296.6v12.9L1333.1 324.7ZM1346.9 318.5L1373.1 303.3v12.9L1346.9 331.4ZM1360.9 325.1L1387.1 309.9v12.9L1360.9 338ZM1180.1 444.7L1206.3 429.5v12.9L1180.1 457.6ZM1173 463.5L1192.5 452.2v12.9L1173 476.4ZM1249.7 419L1275.9 403.8v12.9L1249.7 431.9ZM1180.1 474.1L1206.3 458.9v12.9L1180.1 487ZM1319.1 393.5L1345.3 378.3v12.9L1319.1 406.4ZM1291.3 439L1317.5 423.8v12.9L1291.3 451.9ZM1173 522.3L1192.5 511v12.9L1173 535.2ZM1173 551.7L1192.5 540.4v12.9L1173 564.6ZM1194.1 539.5L1220.3 524.3v12.9L1194.1 552.4ZM1416.5 439.9L1442.7 424.7v12.9L1416.5 452.8ZM1173 625.2L1178.5 622v12.9L1173 638.1ZM1263.5 602.1L1289.7 586.9v12.9L1263.5 615ZM1173 684L1178.5 680.8v12.9L1173 696.9ZM1207.9 663.8L1234.1 648.6v12.9L1207.9 676.7ZM1374.7 567L1400.9 551.8v12.9L1374.7 579.9ZM1291.3 674.2L1317.5 659v12.9L1291.3 687.1ZM1402.5 609.7L1428.7 594.5v12.9L1402.5 622.6ZM1319.1 687.5L1345.3 672.3v12.9L1319.1 700.4ZM1360.9 707.3L1387.1 692.1v12.9L1360.9 720.2ZM1221.9 846.7L1248.1 831.5v12.9L1221.9 859.6ZM1180.1 885.7L1206.3 870.5v12.9L1180.1 898.6ZM1263.5 837.3L1289.7 822.1v12.9L1263.5 850.2ZM1305.3 827.8L1331.5 812.6v12.9L1305.3 840.7ZM1291.3 850.6L1317.5 835.4v12.9L1291.3 863.5ZM1319.1 834.5L1345.3 819.3v12.9L1319.1 847.4ZM1402.5 786.1L1428.7 770.9v12.9L1402.5 799Z"/>
<path fill="#6c482a" d="M1333.1 253L1359.3 237.8v12.9L1333.1 265.9ZM1319.1 275.9L1345.3 260.7v12.9L1319.1 288.8ZM1194.1 363.1L1220.3 347.9v12.9L1194.1 376ZM1173 390L1178.5 386.8v12.9L1173 402.9ZM1207.9 369.8L1234.1 354.6v12.9L1207.9 382.7ZM1263.5 337.5L1289.7 322.3v12.9L1263.5 350.4ZM1319.1 305.3L1345.3 290.1v12.9L1319.1 318.2ZM1346.9 289.1L1373.1 273.9v12.9L1346.9 302ZM1173 419.4L1178.5 416.2v12.9L1173 432.3ZM1263.5 366.9L1289.7 351.7v12.9L1263.5 379.8ZM1291.3 350.8L1317.5 335.6v12.9L1291.3 363.7ZM1319.1 334.7L1345.3 319.5v12.9L1319.1 347.6ZM1402.5 286.3L1428.7 271.1v12.9L1402.5 299.2ZM1333.1 341.2L1359.3 326v12.9L1333.1 354.1ZM1388.7 309L1414.9 293.8v12.9L1388.7 321.9ZM1263.5 396.3L1289.7 381.1v12.9L1263.5 409.2ZM1319.1 364.1L1345.3 348.9v12.9L1319.1 377ZM1194.1 451.3L1220.3 436.1v12.9L1194.1 464.2ZM1221.9 435.1L1248.1 419.9v12.9L1221.9 448ZM1277.5 402.9L1303.7 387.7v12.9L1277.5 415.8ZM1360.9 354.5L1387.1 339.3v12.9L1360.9 367.4ZM1416.5 322.3L1442.7 307.1v12.9L1416.5 335.2ZM1360.9 413.3L1387.1 398.1v12.9L1360.9 426.2ZM1402.5 403.9L1428.7 388.7v12.9L1402.5 416.8ZM1333.1 458.8L1359.3 443.6v12.9L1333.1 471.7ZM1416.5 410.5L1442.7 395.3v12.9L1416.5 423.4ZM1333.1 488.2L1359.3 473v12.9L1333.1 501.1ZM1360.9 472.1L1387.1 456.9v12.9L1360.9 485ZM1235.7 588.8L1261.9 573.6v12.9L1235.7 601.7ZM1402.5 492.1L1428.7 476.9v12.9L1402.5 505ZM1180.1 650.5L1206.3 635.3v12.9L1180.1 663.4ZM1291.3 586L1317.5 570.8v12.9L1291.3 598.9ZM1333.1 576.4L1359.3 561.2v12.9L1333.1 589.3ZM1360.9 560.3L1387.1 545.1v12.9L1360.9 573.2ZM1416.5 528.1L1442.7 512.9v12.9L1416.5 541ZM1402.5 550.9L1428.7 535.7v12.9L1402.5 563.8ZM1194.1 686.5L1220.3 671.3v12.9L1194.1 699.4ZM1360.9 619.1L1387.1 603.9v12.9L1360.9 632ZM1277.5 696.9L1303.7 681.7v12.9L1277.5 709.8ZM1374.7 655.2L1400.9 640v12.9L1374.7 668.1ZM1221.9 758.5L1248.1 743.3v12.9L1221.9 771.4ZM1402.5 668.5L1428.7 653.3v12.9L1402.5 681.4ZM1319.1 746.3L1345.3 731.1v12.9L1319.1 759.2ZM1194.1 833.5L1220.3 818.3v12.9L1194.1 846.4ZM1249.7 801.2L1275.9 786v12.9L1249.7 814.1ZM1277.5 785.1L1303.7 769.9v12.9L1277.5 798ZM1249.7 830.6L1275.9 815.4v12.9L1249.7 843.5ZM1388.7 750L1414.9 734.8v12.9L1388.7 762.9ZM1346.9 788.9L1373.1 773.7v12.9L1346.9 801.8ZM1374.7 772.8L1400.9 757.6v12.9L1374.7 785.7ZM1194.1 892.3L1220.3 877.1v12.9L1194.1 905.2Z"/>
<path fill="#66472b" d="M1374.7 243.6L1400.9 228.4v12.9L1374.7 256.5ZM1416.5 234.1L1442.7 218.9v12.9L1416.5 247ZM1194.1 392.5L1220.3 377.3v12.9L1194.1 405.4ZM1360.9 295.7L1387.1 280.5v12.9L1360.9 308.6ZM1235.7 412.4L1261.9 397.2v12.9L1235.7 425.3ZM1291.3 380.2L1317.5 365v12.9L1291.3 393.1ZM1360.9 442.7L1387.1 427.5v12.9L1360.9 455.6ZM1388.7 456L1414.9 440.8v12.9L1388.7 468.9ZM1305.3 533.8L1331.5 518.6v12.9L1305.3 546.7ZM1319.1 540.5L1345.3 525.3v12.9L1319.1 553.4ZM1173 742.8L1178.5 739.6v12.9L1173 755.7ZM1416.5 645.7L1442.7 630.5v12.9L1416.5 658.6ZM1374.7 684.6L1400.9 669.4v12.9L1374.7 697.5ZM1249.7 771.8L1275.9 756.6v12.9L1249.7 784.7ZM1180.1 826.9L1206.3 811.7v12.9L1180.1 839.8ZM1305.3 769L1331.5 753.8v12.9L1305.3 781.9ZM1388.7 720.6L1414.9 705.4v12.9L1388.7 733.5ZM1249.7 889.4L1275.9 874.2v12.9L1249.7 902.3ZM1388.7 808.8L1414.9 793.6v12.9L1388.7 821.7Z"/>
<path fill="#754b34" d="M1277.5 285.3L1303.7 270.1v12.9L1277.5 298.2ZM1388.7 250.2L1414.9 235v12.9L1388.7 263.1ZM1235.7 383L1261.9 367.8v12.9L1235.7 395.9ZM1402.5 345.1L1428.7 329.9v12.9L1402.5 358ZM1277.5 432.3L1303.7 417.1v12.9L1277.5 445.2ZM1416.5 351.7L1442.7 336.5v12.9L1416.5 364.6ZM1173 507.6L1178.5 504.4v12.9L1173 520.5ZM1221.9 493.9L1248.1 478.7v12.9L1221.9 506.8ZM1221.9 552.7L1248.1 537.5v12.9L1221.9 565.6ZM1194.1 598.3L1220.3 583.1v12.9L1194.1 611.2ZM1416.5 498.7L1442.7 483.5v12.9L1416.5 511.6ZM1319.1 569.9L1345.3 554.7v12.9L1319.1 582.8ZM1263.5 631.5L1289.7 616.3v12.9L1263.5 644.4ZM1291.3 615.4L1317.5 600.2v12.9L1291.3 628.3ZM1346.9 583.1L1373.1 567.9v12.9L1346.9 596ZM1173 713.4L1178.5 710.2v12.9L1173 726.3ZM1374.7 596.4L1400.9 581.2v12.9L1374.7 609.3ZM1305.3 651.4L1331.5 636.2v12.9L1305.3 664.3ZM1388.7 603L1414.9 587.8v12.9L1388.7 615.9ZM1402.5 639.1L1428.7 623.9v12.9L1402.5 652ZM1291.3 733L1317.5 717.8v12.9L1291.3 745.9ZM1194.1 804.1L1220.3 788.9v12.9L1194.1 817ZM1207.9 810.8L1234.1 795.6v12.9L1207.9 823.7ZM1346.9 730.1L1373.1 714.9v12.9L1346.9 743ZM1360.9 736.7L1387.1 721.5v12.9L1360.9 749.6ZM1173 860.4L1178.5 857.2v12.9L1173 873.3ZM1207.9 840.2L1234.1 825v12.9L1207.9 853.1ZM1374.7 743.4L1400.9 728.2v12.9L1374.7 756.3ZM1305.3 798.4L1331.5 783.2v12.9L1305.3 811.3ZM1360.9 766.1L1387.1 750.9v12.9L1360.9 779ZM1416.5 733.9L1442.7 718.7v12.9L1416.5 746.8ZM1173 904.5L1192.5 893.2v12.9L1173 917.4ZM1263.5 866.7L1289.7 851.5v12.9L1263.5 879.6ZM1173 933.9L1192.5 922.6v12.9L1173 946.8ZM1277.5 873.3L1303.7 858.1v12.9L1277.5 886.2ZM1305.3 857.2L1331.5 842v12.9L1305.3 870.1Z"/>
<path fill="#714731" d="M1249.7 301.4L1275.9 286.2v12.9L1249.7 314.3ZM1360.9 236.9L1387.1 221.7v12.9L1360.9 249.8ZM1305.3 298.6L1331.5 283.4v12.9L1305.3 311.5ZM1388.7 279.6L1414.9 264.4v12.9L1388.7 292.5ZM1374.7 331.8L1400.9 316.6v12.9L1374.7 344.7ZM1333.1 370.6L1359.3 355.4v12.9L1333.1 383.5ZM1388.7 367.8L1414.9 352.6v12.9L1388.7 380.7ZM1346.9 406.7L1373.1 391.5v12.9L1346.9 419.6ZM1305.3 445.6L1331.5 430.4v12.9L1305.3 458.5ZM1291.3 468.4L1317.5 453.2v12.9L1291.3 481.3ZM1221.9 523.3L1248.1 508.1v12.9L1221.9 536.2ZM1173 595.8L1178.5 592.6v12.9L1173 608.7ZM1291.3 527.2L1317.5 512v12.9L1291.3 540.1ZM1173 639.9L1192.5 628.6v12.9L1173 652.8ZM1305.3 592.6L1331.5 577.4v12.9L1305.3 605.5ZM1249.7 654.2L1275.9 639v12.9L1249.7 667.1ZM1388.7 573.6L1414.9 558.4v12.9L1388.7 586.5ZM1416.5 557.5L1442.7 542.3v12.9L1416.5 570.4ZM1402.5 580.3L1428.7 565.1v12.9L1402.5 593.2ZM1207.9 722.6L1234.1 707.4v12.9L1207.9 735.5ZM1221.9 787.9L1248.1 772.7v12.9L1221.9 800.8ZM1333.1 723.4L1359.3 708.2v12.9L1333.1 736.3ZM1173 831L1178.5 827.8v12.9L1173 843.9ZM1291.3 762.4L1317.5 747.2v12.9L1291.3 775.3ZM1402.5 697.9L1428.7 682.7v12.9L1402.5 710.8ZM1173 845.7L1192.5 834.4v12.9L1173 858.6ZM1416.5 704.5L1442.7 689.3v12.9L1416.5 717.4ZM1180.1 856.3L1206.3 841.1v12.9L1180.1 869.2ZM1319.1 805.1L1345.3 789.9v12.9L1319.1 818ZM1249.7 860L1275.9 844.8v12.9L1249.7 872.9ZM1277.5 843.9L1303.7 828.7v12.9L1277.5 856.8ZM1173 919.2L1178.5 916v12.9L1173 932.1ZM1235.7 882.8L1261.9 867.6v12.9L1235.7 895.7Z"/>
</g>
<path fill="none" stroke="#3a2a20" stroke-width="0.7" opacity="0.6" d="M828 287.9L1173 359.1M828 302.6L1173 373.8M828 317.3L1173 388.6M828 332L1173 403.2M828 346.7L1173 417.9M828 361.4L1173 432.6M828 376.1L1173 447.3M828 390.8L1173 462.1M828 405.5L1173 476.7M828 420.2L1173 491.4M828 434.9L1173 506.1M828 449.6L1173 520.9M828 464.3L1173 535.6M828 479L1173 550.2M828 493.7L1173 565M828 508.4L1173 579.7M828 523.1L1173 594.4M828 537.8L1173 609M828 552.5L1173 623.8M828 567.2L1173 638.5M828 581.9L1173 653.2M828 596.6L1173 667.9M828 611.3L1173 682.5M828 626L1173 697.2M828 640.7L1173 712M828 655.4L1173 726.7M828 670.1L1173 741.4M828 684.8L1173 756M828 699.5L1173 770.8M828 714.2L1173 785.5M828 728.9L1173 800.2M828 743.6L1173 814.9M828 758.3L1173 829.5M828 773L1173 844.2M828 787.7L1173 859M828 802.4L1173 873.6M828 817.1L1173 888.4M828 831.8L1173 903.1M828 846.5L1173 917.8M828 861.2L1173 932.5"/>
<path fill="none" stroke="#33251b" stroke-width="0.7" opacity="0.6" d="M1173 359.1L1412 220.5M1173 373.8L1412 235.2M1173 388.6L1412 249.9M1173 403.2L1412 264.6M1173 417.9L1412 279.3M1173 432.6L1412 294M1173 447.3L1412 308.7M1173 462.1L1412 323.4M1173 476.7L1412 338.1M1173 491.4L1412 352.8M1173 506.1L1412 367.5M1173 520.9L1412 382.2M1173 535.6L1412 396.9M1173 550.2L1412 411.6M1173 565L1412 426.3M1173 579.7L1412 441M1173 594.4L1412 455.7M1173 609L1412 470.4M1173 623.8L1412 485.1M1173 638.5L1412 499.8M1173 653.2L1412 514.5M1173 667.9L1412 529.2M1173 682.5L1412 543.9M1173 697.2L1412 558.6M1173 712L1412 573.3M1173 726.7L1412 588M1173 741.4L1412 602.7M1173 756L1412 617.4M1173 770.8L1412 632.1M1173 785.5L1412 646.8M1173 800.2L1412 661.5M1173 814.9L1412 676.2M1173 829.5L1412 690.9M1173 844.2L1412 705.6M1173 859L1412 720.3M1173 873.6L1412 735M1173 888.4L1412 749.7M1173 903.1L1412 764.4M1173 917.8L1412 779.1M1173 932.5L1412 793.8"/>
<path fill="#6f462c" d="M828 263.8 L1160.9 332.5 L1173 345 L828 273.8 Z"/>
<path fill="#7a4a2f" d="M1160.9 332.5 L1412 185.9 L1412 206.4 L1173 345 Z"/>
<path stroke="#5e3a22" stroke-width="1.2" fill="none" d="M1167 338.7 L1412 196.1"/>
<path fill="#8f7a58" d="M828 249.5 L1153 316.6 L1160.9 326.6 L828 257.9 Z"/>
<path fill="#b0946c" d="M828 257.9 L1160.9 326.6 L1160.9 332.5 L828 263.8 Z"/>
<path fill="#98805f" d="M1153 316.6 L1395.7 174.9 L1412 178.3 L1412 180 L1160.9 326.6 Z"/>
<path fill="#9f8563" d="M1160.9 326.6 L1412 180 L1412 185.9 L1160.9 332.5 Z"/>
<g fill="none" stroke="#6f7f94" stroke-width="0.9">
<path d="M828 249.5 L1153 316.6 L1395.7 174.9 L1412 178.3"/>
<path d="M828 257.9 L1160.9 326.6 L1412 180"/>
<path d="M828 263.8 L1160.9 332.5 L1412 185.9 M1160.9 326.6 L1160.9 332.5"/>
<path d="M828 273.8 L1173 345 L1412 206.4 M1173 345 L1173 935"/>
</g>
<path fill="#b7a47f" d="M849.6 337.2 L1173 403.8 L1173 699 L849.6 632.2 Z"/>
<path fill="#86512f" d="M849.6 337.2 L858.3 339 L858.3 627.2 L849.6 632.2 Z"/>
<path stroke="#7b6a50" stroke-width="1.2" d="M849.6 337.2 L858.3 332.2"/>
<path stroke="#7b6a50" stroke-width="1.2" d="M849.6 351.9 L858.3 346.9"/>
<path stroke="#7b6a50" stroke-width="1.2" d="M849.6 366.6 L858.3 361.6"/>
<path stroke="#7b6a50" stroke-width="1.2" d="M849.6 381.3 L858.3 376.3"/>
<path stroke="#7b6a50" stroke-width="1.2" d="M849.6 396 L858.3 391"/>
<path stroke="#7b6a50" stroke-width="1.2" d="M849.6 410.7 L858.3 405.7"/>
<path stroke="#7b6a50" stroke-width="1.2" d="M849.6 425.4 L858.3 420.4"/>
<path stroke="#7b6a50" stroke-width="1.2" d="M849.6 440.1 L858.3 435.1"/>
<path stroke="#7b6a50" stroke-width="1.2" d="M849.6 454.8 L858.3 449.8"/>
<path stroke="#7b6a50" stroke-width="1.2" d="M849.6 469.5 L858.3 464.5"/>
<path stroke="#7b6a50" stroke-width="1.2" d="M849.6 484.2 L858.3 479.2"/>
<path stroke="#7b6a50" stroke-width="1.2" d="M849.6 498.9 L858.3 493.9"/>
<path stroke="#7b6a50" stroke-width="1.2" d="M849.6 513.6 L858.3 508.6"/>
<path stroke="#7b6a50" stroke-width="1.2" d="M849.6 528.3 L858.3 523.3"/>
<path stroke="#7b6a50" stroke-width="1.2" d="M849.6 543 L858.3 538"/>
<path stroke="#7b6a50" stroke-width="1.2" d="M849.6 557.7 L858.3 552.7"/>
<path stroke="#7b6a50" stroke-width="1.2" d="M849.6 572.4 L858.3 567.4"/>
<path stroke="#7b6a50" stroke-width="1.2" d="M849.6 587.1 L858.3 582.1"/>
<path stroke="#7b6a50" stroke-width="1.2" d="M849.6 601.8 L858.3 596.8"/>
<path stroke="#7b6a50" stroke-width="1.2" d="M849.6 616.5 L858.3 611.5"/>
<path stroke="#7b6a50" stroke-width="1.2" d="M849.6 631.2 L858.3 626.2"/>
<path fill="#7b4b2d" d="M858.3 627.2 L1168.6 691.3 L1173 699 L849.6 632.2 Z"/>
<path fill="#78b84a" d="M858.3 339 L1168.6 403.1 L1168.6 691.3 L858.3 627.2 Z"/>
<path stroke="#4f4a3c" stroke-width="1.8" fill="none" d="M866.3 342.8 L1168.6 405.3"/>
<path fill="url(#gl)" d="M880.6 355.3 L989.3 377.7 L989.3 636.8 L880.6 614.4 Z"/>
<path fill="url(#gl)" d="M1026.9 385.5 L1138.5 408.6 L1138.5 667.7 L1026.9 644.6 Z"/>
<g fill="#a3a674" opacity="0.95">
<path d="M872.5 344.9 L877.8 346 L877.8 625.2 L872.5 624.1 Z"/>
<path d="M996.3 370.5 L998.3 370.9 L998.3 650.1 L996.3 649.7 Z"/>
<path d="M1003.8 372 L1005.6 372.4 L1005.6 651.6 L1003.8 651.2 Z"/>
<path d="M1011.5 373.6 L1013.5 374 L1013.5 653.2 L1011.5 652.8 Z"/>
<path d="M1016.8 374.7 L1018.6 375.1 L1018.6 654.3 L1016.8 653.9 Z"/>
<path d="M1150 402.2 L1154.5 403.2 L1154.5 682.4 L1150 681.4 Z"/>
<path d="M1160 404.3 L1163 404.9 L1163 684.1 L1160 683.5 Z"/>
</g>
<g fill="none" stroke="#55b822" stroke-width="1.4">
<path d="M858.8 340.1 L858.8 626.3"/>
<path d="M863.5 341.1 L863.5 627.3"/>
<path d="M871.5 342.7 L871.5 628.9"/>
<path d="M877 343.9 L877 630.1"/>
<path d="M990.5 367.3 L990.5 653.5"/>
<path d="M994 368 L994 654.2"/>
<path d="M1003 369.9 L1003 656.1"/>
<path d="M1006.5 370.6 L1006.5 656.8"/>
<path d="M1010 371.3 L1010 657.5"/>
<path d="M1020 373.4 L1020 659.6"/>
<path d="M1025.5 374.5 L1025.5 660.7"/>
<path d="M1140 398.2 L1140 684.4"/>
<path d="M1144 399 L1144 685.2"/>
<path d="M1153 400.9 L1153 687.1"/>
<path d="M1157.5 401.8 L1157.5 688"/>
<path d="M1167.8 403.9 L1167.8 690.1"/>
<path d="M858.3 339 L1171.6 403.7" stroke-width="1.8"/>
<path d="M868 346.7 L1001 374.2 M1014 376.8 L1150 404.9"/>
<path d="M858.3 627.2 L1168.6 691.3" stroke-width="1.6"/>
</g>
<path fill="#74b842" d="M872 612.9 L997 638.7 L997 643 L872 617.2 Z"/>
<path fill="#a6a678" d="M868 616.4 L1001 643.9 L1001 647.5 L868 620 Z"/>
<path fill="#62c02c" d="M864 619.2 L1005 648.3 L1005 655.7 L864 626.6 Z"/>
<path fill="#3f8f1a" d="M864 626.6 L1005 655.7 L1005 657.5 L864 628.4 Z"/>
<path fill="none" stroke="#d0900e" stroke-width="0.8" d="M873 617.2l3 -3.6M876.2 617.9l3 -3.6M879.4 618.6l3 -3.6M882.6 619.2l3 -3.6M885.8 619.9l3 -3.6M889 620.5l3 -3.6M892.2 621.2l3 -3.6M895.4 621.9l3 -3.6M898.6 622.5l3 -3.6M901.8 623.2l3 -3.6M905 623.8l3 -3.6M908.2 624.5l3 -3.6M911.4 625.2l3 -3.6M914.6 625.8l3 -3.6M917.8 626.5l3 -3.6M921 627.1l3 -3.6M924.2 627.8l3 -3.6M927.4 628.5l3 -3.6M930.6 629.1l3 -3.6M933.8 629.8l3 -3.6M937 630.4l3 -3.6M940.2 631.1l3 -3.6M943.4 631.8l3 -3.6M946.6 632.4l3 -3.6M949.8 633.1l3 -3.6M953 633.8l3 -3.6M956.2 634.4l3 -3.6M959.4 635.1l3 -3.6M962.6 635.7l3 -3.6M965.8 636.4l3 -3.6M969 637.1l3 -3.6M972.2 637.7l3 -3.6M975.4 638.4l3 -3.6M978.6 639l3 -3.6M981.8 639.7l3 -3.6M985 640.4l3 -3.6M988.2 641l3 -3.6M991.4 641.7l3 -3.6"/>
<path fill="none" stroke="#d0900e" stroke-width="0.8" d="M864 623L1005 652.1"/>
<path fill="#74b842" d="M1018 643.1 L1146 669.5 L1146 673.8 L1018 647.4 Z"/>
<path fill="#a6a678" d="M1014 646.6 L1150 674.6 L1150 678.2 L1014 650.2 Z"/>
<path fill="#62c02c" d="M1010 649.3 L1154 679.1 L1154 686.5 L1010 656.7 Z"/>
<path fill="#3f8f1a" d="M1010 656.7 L1154 686.5 L1154 688.3 L1010 658.5 Z"/>
<path fill="none" stroke="#d0900e" stroke-width="0.8" d="M1019 647.4l3 -3.6M1022.2 648l3 -3.6M1025.4 648.7l3 -3.6M1028.6 649.4l3 -3.6M1031.8 650l3 -3.6M1035 650.7l3 -3.6M1038.2 651.3l3 -3.6M1041.4 652l3 -3.6M1044.6 652.7l3 -3.6M1047.8 653.3l3 -3.6M1051 654l3 -3.6M1054.2 654.7l3 -3.6M1057.4 655.3l3 -3.6M1060.6 656l3 -3.6M1063.8 656.6l3 -3.6M1067 657.3l3 -3.6M1070.2 658l3 -3.6M1073.4 658.6l3 -3.6M1076.6 659.3l3 -3.6M1079.8 659.9l3 -3.6M1083 660.6l3 -3.6M1086.2 661.3l3 -3.6M1089.4 661.9l3 -3.6M1092.6 662.6l3 -3.6M1095.8 663.2l3 -3.6M1099 663.9l3 -3.6M1102.2 664.6l3 -3.6M1105.4 665.2l3 -3.6M1108.6 665.9l3 -3.6M1111.8 666.5l3 -3.6M1115 667.2l3 -3.6M1118.2 667.9l3 -3.6M1121.4 668.5l3 -3.6M1124.6 669.2l3 -3.6M1127.8 669.9l3 -3.6M1131 670.5l3 -3.6M1134.2 671.2l3 -3.6M1137.4 671.8l3 -3.6M1140.6 672.5l3 -3.6"/>
<path fill="none" stroke="#d0900e" stroke-width="0.8" d="M1010 653.1L1154 682.9"/>
<g fill="none" stroke="#c9920e" stroke-width="0.7" opacity="0.75">
<path d="M880.6 354.3 L989.3 376.7"/>
<path d="M880.6 615.9 L989.3 638.3"/>
<path d="M1026.9 384.5 L1138.5 407.6"/>
<path d="M1026.9 646.1 L1138.5 669.2"/>
<path d="M866.5 344.7 L866.5 625.9"/>
<path d="M875 346.4 L875 627.6"/>
<path d="M992 370.6 L992 651.8"/>
<path d="M1008.5 374 L1008.5 655.2"/>
<path d="M1023 377 L1023 658.2"/>
<path d="M1142 401.6 L1142 682.8"/>
<path d="M1155.5 404.4 L1155.5 685.6"/>
</g>
<path stroke="#9aa19a" stroke-width="1.5" d="M880.3 356.2 L880.3 612.3"/>
<path fill="#5cc82a" opacity="0.30" d="M861 329.1 L1167 392.2 L1171 403.6 L858.3 339 Z"/>
<g fill="none" stroke="#57c425" stroke-width="0.9" opacity="0.75">
<path d="M861 329.1 L1167 392.2"/>
<path d="M861 332.1 L1167 395.2"/>
<path d="M861 335.6 L1167 398.7"/>
<path d="M861 329.1 L861 339.6 M1007 359.2 L1007 369.7 M1013 360.4 L1013 370.9 M1166 392 L1166 406.5 M1169.500 395.3 L1169.500 407.3"/>
</g>
<g fill="none" stroke-linecap="butt">
<path stroke="#7fa11a" stroke-width="1.9" stroke-dasharray="13 9" d="M884.500 360 L1001 514"/>
<path stroke="#c98a12" stroke-width="0.7" stroke-dasharray="13 9" d="M884.500 360 L1001 514"/>
<path stroke="#8f9a48" stroke-width="1.1" stroke-dasharray="11 11" stroke-dashoffset="-5" d="M889.500 358 L1003 508"/>
<path stroke="#58b81e" stroke-width="1.9" stroke-dasharray="16 5" d="M881 613 L999 512"/>
<path stroke="#58b81e" stroke-width="1.9" stroke-dasharray="16 5" d="M1137 409.500 L1009 512"/>
<path stroke="#6fa81a" stroke-width="1.9" stroke-dasharray="13 9" d="M1008 514 L1136 668"/>
<path stroke="#c98a12" stroke-width="0.7" stroke-dasharray="13 9" d="M1008 514 L1136 668"/>
<path stroke="#8f9a48" stroke-width="1.1" stroke-dasharray="11 11" stroke-dashoffset="-5" d="M1013 512 L1139 662"/>
</g>
<path fill="#c51fc0" d="M999 508.500 L1002.500 512 L999 515.500 L995.500 512 Z M1009 508.500 L1012.500 512 L1009 515.500 L1005.500 512 Z"/>
<path fill="#a4906d" d="M1173 403.8 L1366 292.1 L1366 587.3 L1173 699 Z"/>
<path fill="#93845f" d="M1168.6 403.1 L1173 403.8 L1173 699 L1168.6 691.3 Z"/>
<path fill="#a8653f" d="M1353.2 299.5 L1366 292.1 L1366 587.3 L1353.2 581.4 Z"/>
<path stroke="#8f7758" stroke-width="1.2" d="M1353.2 289.5 L1366 292.1"/>
<path stroke="#8f7758" stroke-width="1.2" d="M1353.2 304.2 L1366 306.8"/>
<path stroke="#8f7758" stroke-width="1.2" d="M1353.2 318.9 L1366 321.5"/>
<path stroke="#8f7758" stroke-width="1.2" d="M1353.2 333.6 L1366 336.2"/>
<path stroke="#8f7758" stroke-width="1.2" d="M1353.2 348.3 L1366 350.9"/>
<path stroke="#8f7758" stroke-width="1.2" d="M1353.2 363 L1366 365.6"/>
<path stroke="#8f7758" stroke-width="1.2" d="M1353.2 377.7 L1366 380.3"/>
<path stroke="#8f7758" stroke-width="1.2" d="M1353.2 392.4 L1366 395"/>
<path stroke="#8f7758" stroke-width="1.2" d="M1353.2 407.1 L1366 409.7"/>
<path stroke="#8f7758" stroke-width="1.2" d="M1353.2 421.8 L1366 424.4"/>
<path stroke="#8f7758" stroke-width="1.2" d="M1353.2 436.5 L1366 439.1"/>
<path stroke="#8f7758" stroke-width="1.2" d="M1353.2 451.2 L1366 453.8"/>
<path stroke="#8f7758" stroke-width="1.2" d="M1353.2 465.9 L1366 468.5"/>
<path stroke="#8f7758" stroke-width="1.2" d="M1353.2 480.6 L1366 483.2"/>
<path stroke="#8f7758" stroke-width="1.2" d="M1353.2 495.3 L1366 497.9"/>
<path stroke="#8f7758" stroke-width="1.2" d="M1353.2 510 L1366 512.6"/>
<path stroke="#8f7758" stroke-width="1.2" d="M1353.2 524.7 L1366 527.3"/>
<path stroke="#8f7758" stroke-width="1.2" d="M1353.2 539.4 L1366 542"/>
<path stroke="#8f7758" stroke-width="1.2" d="M1353.2 554.1 L1366 556.7"/>
<path stroke="#8f7758" stroke-width="1.2" d="M1353.2 568.8 L1366 571.4"/>
<path stroke="#8f7758" stroke-width="1.2" d="M1353.2 583.5 L1366 586.1"/>
<path fill="#6e4327" d="M1173 685.4 L1353.2 581.4 L1366 587.3 L1173 699 Z"/>
<path fill="#c1c1c1" d="M1187.3 402.7 L1245.9 368.8 L1245.9 617.1 L1187.3 648.3 Z"/>
<path fill="#c1c1c1" d="M1276.1 351.3 L1335.7 316.8 L1335.7 576.2 L1276.1 598.8 Z"/>
<path fill="#a9a9a9" d="M1314 343.4 L1334 318.8 L1334 576.9 L1314 577.4 Z"/>
<path fill="#9a9a9a" d="M1314 329.4 L1334 317.8 L1334 318.8 L1314 343.4 Z"/>
<path fill="#8f8f8f" d="M1187.3 648.3 L1245.9 617.1 L1245.9 625.1 L1191.3 658.3 Z"/>
<path fill="#8f8f8f" d="M1276.1 598.8 L1314 577.4 L1335.7 576.2 L1335.7 579.2 L1276.1 609.8 Z"/>
<path stroke="#55514a" stroke-width="2.6" fill="none" d="M1175 404.2 L1360 297.1"/>
<g fill="none" stroke="#f5780f" stroke-width="1.4">
<path d="M1174.5 406.9 L1174.5 683.5"/>
<path d="M1179 404.3 L1179 680.9"/>
<path d="M1186.5 400 L1186.5 676.6"/>
<path d="M1246.5 365.2 L1246.5 642"/>
<path d="M1250 363.2 L1250 640"/>
<path d="M1254 360.9 L1254 637.7"/>
<path d="M1258.5 358.3 L1258.5 635.1"/>
<path d="M1264 355.1 L1264 631.9"/>
<path d="M1269.5 351.9 L1269.5 628.7"/>
<path d="M1275.5 348.5 L1275.5 625.3"/>
<path d="M1336.5 313.1 L1336.5 590.1"/>
<path d="M1340.5 310.8 L1340.5 587.8"/>
<path d="M1345 308.2 L1345 585.2"/>
<path d="M1352.6 303.8 L1352.6 580.8"/>
<path d="M1181.5 680.5 L1353.2 581.4" stroke-width="1.5"/>
<path d="M1187.3 402.7 L1245.9 368.8 M1276.1 351.3 L1343 312.6"/>
<path d="M1185 660.3 L1252 621.6 M1272 611.6 L1342 571.2"/>
<path d="M1185 663.8 L1252 625.1 M1272 615.1 L1342 574.7"/>
<path d="M1185 667.3 L1252 628.6 M1272 618.6 L1342 578.2"/>
<path d="M1185 671.3 L1252 632.6 M1272 622.6 L1342 582.2"/>
</g>
<g fill="none" stroke="#f08a32" stroke-width="1.1" stroke-dasharray="11 8">
<path d="M1189 409 L1263 487 M1195 407 L1268 484"/>
<path d="M1340 318 L1263 492 M1344 324 L1270 492"/>
<path d="M1263 492 L1198 652 M1270 492 L1206 648"/>
<path d="M1266 490 L1338 578 M1272 488 L1342 572"/>
</g>
<g fill="none" stroke="#6f7f94" stroke-width="0.9">
<path d="M849.6 632.2 L1173 699 M849.6 337.2 L849.6 632.2 L858.3 627.2"/>
<path d="M1173 699 L1366 587.3 L1366 292.1"/>
</g>
<g fill="#000">
<circle cx="849.6" cy="337.2" r="3.1"/>
<circle cx="849.6" cy="632.2" r="3.1"/>
<circle cx="880.1" cy="614.3" r="3.1"/>
<circle cx="1172.7" cy="403.7" r="3.1"/>
<circle cx="1203.3" cy="385.5" r="3.1"/>
<circle cx="1172.6" cy="698.9" r="3.1"/>
<circle cx="1203.4" cy="680.8" r="3.1"/>
</g>
<g fill="#35602a" opacity="0.55"><circle cx="1013" cy="653" r="2.6"/><circle cx="1151.2" cy="670.3" r="2.6"/></g>
<path d="M1168.500 814.500 h11 v1.800 h-11 Z M1168.500 818 h11 v1.800 h-11 Z" fill="#fff" stroke="#222" stroke-width="0.7"/>
</g>
</svg>
</body>
</html>
